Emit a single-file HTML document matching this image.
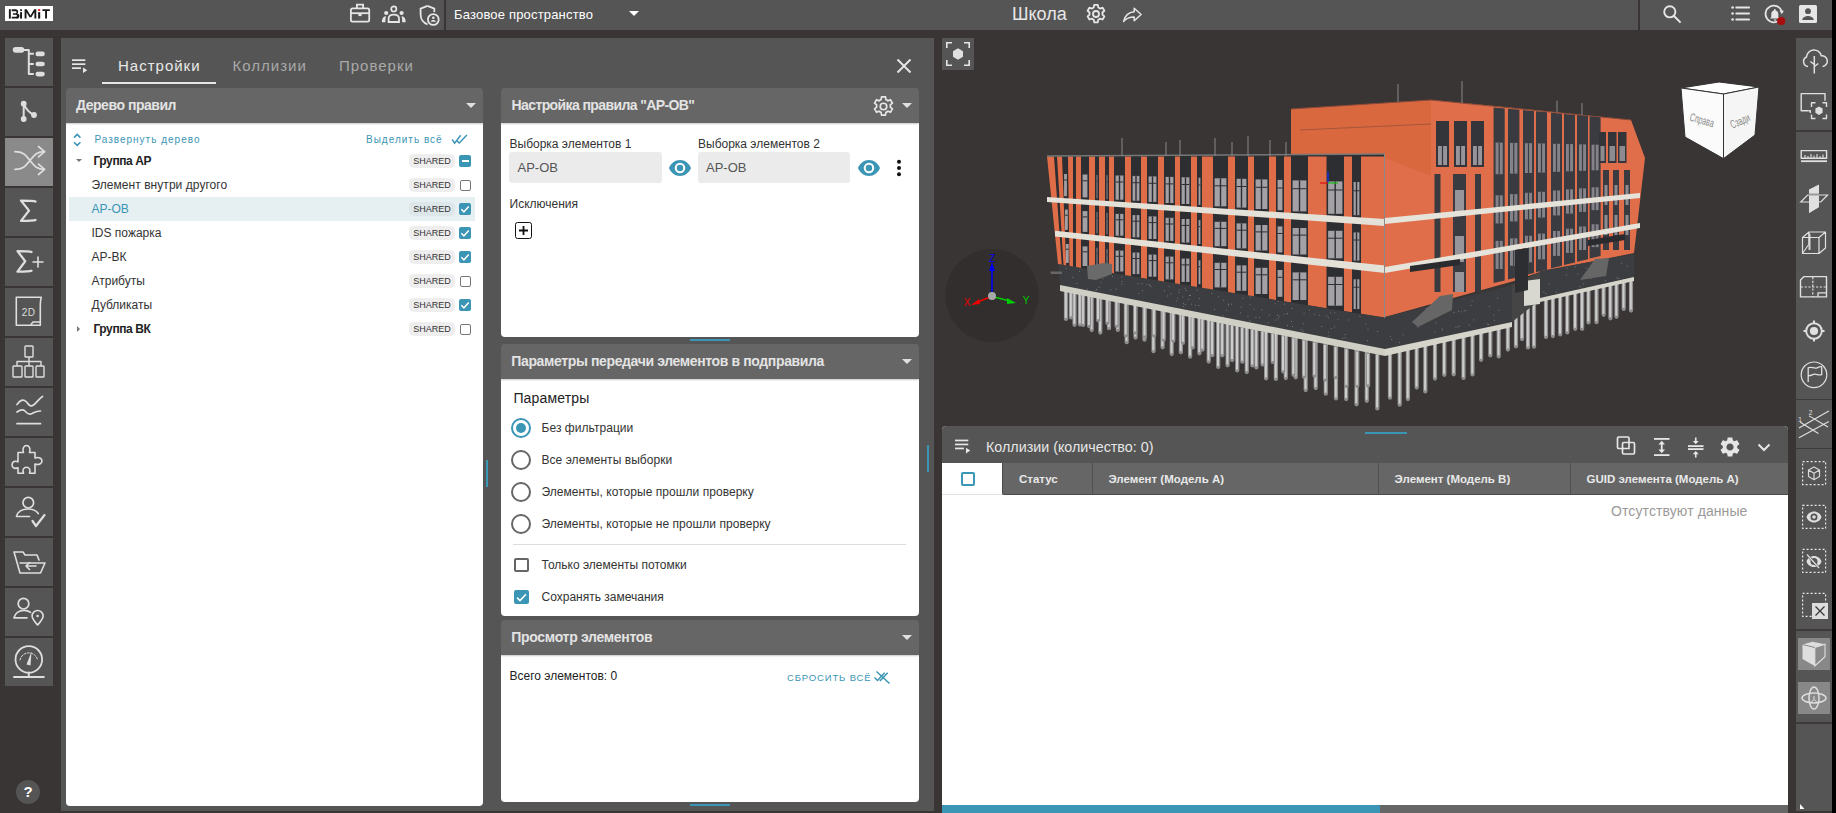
<!DOCTYPE html>
<html><head><meta charset="utf-8">
<style>
*{box-sizing:border-box;margin:0;padding:0}
html,body{width:1836px;height:813px;overflow:hidden;background:#393534;font-family:"Liberation Sans",sans-serif}
.a{position:absolute}
#top{left:0;top:0;width:1836px;height:30px;background:#555555}
.sb{position:absolute;left:5px;width:48px;height:48px;background:#555555}
.card{position:absolute;background:linear-gradient(#666666 0 30px,#fff 30px);border-radius:4px;overflow:hidden}
.ch{position:absolute;left:0;top:0;right:0;height:35px;background:#666666;box-shadow:0 1px 1.5px rgba(0,0,0,.22);color:#e3e3e3;font-weight:bold;font-size:13.5px}
.tri{position:absolute;width:0;height:0;border-left:5px solid transparent;border-right:5px solid transparent;border-top:5px solid #e0e0e0}
svg{position:absolute;overflow:visible}
.t{position:absolute;white-space:nowrap}
</style></head><body>
<!-- top bar -->
<div id="top" class="a">
  <div class="a" style="left:5px;top:6px;width:48px;height:15px;background:#fff"></div>
  <svg style="left:0;top:0" width="60" height="30">
    <g fill="#1a1a1a">
      <rect x="8.9" y="9.2" width="1.9" height="9.4"/>
      <path d="M11.7 9.2h4.1a2.4 2.4 0 0 1 1.6 4.2a2.6 2.6 0 0 1-1.3 5.2h-4.4v-1.8h4.2a1 1 0 0 0 0-2h-3v-1.6h2.7a.9.9 0 0 0 0-1.9h-3.9z"/>
      <rect x="20.1" y="12.1" width="1.9" height="6.5"/>
      <rect x="20.1" y="9.3" width="1.9" height="1.7"/>
      <path d="M24.6 18.6V9.2h2.1l3.75 6.3 3.75-6.3h2.1v9.4h-1.9v-6.3l-3 5h-1.9l-3-5v6.3z"/>
      <rect x="38.1" y="12.1" width="2.1" height="6.5"/>
      <path d="M42.4 9.3h7.4v1.8h-2.8v7.5h-1.9v-7.5h-2.7z"/>
    </g>
    <rect x="38.1" y="9.2" width="2.1" height="1.7" fill="#e00"/>
  </svg>
  <!-- briefcase -->
  <svg style="left:348px;top:1px" width="26" height="24" viewBox="0 0 26 24">
    <g fill="none" stroke="#e6e6e6" stroke-width="1.8">
      <rect x="2.9" y="7.3" width="18.3" height="13.3" rx="1.6"/>
      <path d="M8.9 7.3V3.7h6.2v3.6"/>
      <path d="M3 12.2h18.2"/>
    </g>
    <rect x="10.4" y="12.5" width="3.2" height="2.6" fill="#e6e6e6"/>
  </svg>
  <!-- people -->
  <svg style="left:380px;top:4px" width="28" height="20" viewBox="0 0 28 20">
    <g fill="#e6e6e6">
      <circle cx="13.8" cy="4.9" r="2.6" fill="none" stroke="#e6e6e6" stroke-width="1.7"/>
      <circle cx="6.2" cy="9" r="2.1"/>
      <circle cx="21.6" cy="9" r="2.1"/>
      <path d="M1.9 18.2c0-3 1-5.4 3.4-5.9h.7c-.5 1.8-.7 3.8-.6 5.9z"/>
      <path d="M25.7 18.2c0-3-1-5.4-3.4-5.9h-.7c.5 1.8.7 3.8.6 5.9z"/>
    </g>
    <path d="M8.6 18v-3.6c0-2.2 1.8-3.8 5.2-3.8s5.2 1.6 5.2 3.8V18z" fill="none" stroke="#e6e6e6" stroke-width="1.8"/>
  </svg>
  <!-- shield -->
  <svg style="left:417px;top:3px" width="26" height="24" viewBox="0 0 26 24">
    <path d="M10.5 2.8L3.6 5.7v5.8c0 4.6 3 8.5 6.9 9.8" fill="none" stroke="#e6e6e6" stroke-width="1.8"/>
    <path d="M10.5 2.8l6.8 2.9v3.4" fill="none" stroke="#e6e6e6" stroke-width="1.8"/>
    <circle cx="16.3" cy="16.5" r="5.4" fill="#555" stroke="#e6e6e6" stroke-width="1.8"/>
    <circle cx="16.3" cy="14.8" r="1.3" fill="#e6e6e6"/>
    <path d="M13.6 18.8c.5-1.3 1.4-1.8 2.7-1.8s2.2.5 2.7 1.8z" fill="#e6e6e6"/>
  </svg>
  <div class="a" style="left:444px;top:0;width:2px;height:30px;background:#393534"></div>
  <div class="t" style="left:454px;top:7px;font-size:13px;line-height:16px;color:#fff;letter-spacing:0.18px">Базовое пространство</div>
  <div class="tri" style="left:629px;top:11px;border-top-color:#fff;border-left-width:5px;border-right-width:5px;border-top-width:5.5px"></div>
  <div class="t" style="left:1012px;top:4px;font-size:18px;line-height:20px;color:#e8e8e8">Школа</div>
  <!-- gear -->
  <svg style="left:1084px;top:2px" width="24" height="24" viewBox="0 0 24 24">
    <path fill="none" stroke="#e6e6e6" stroke-width="1.8" stroke-linejoin="round" d="M10.2 2.9h3.6l.5 2.6c.7.25 1.3.6 1.8 1.05l2.5-.85 1.8 3.1-2 1.75c.15.7.15 1.4 0 2.1l2 1.75-1.8 3.1-2.5-.85c-.55.45-1.15.8-1.8 1.05l-.5 2.6h-3.6l-.5-2.6c-.7-.25-1.3-.6-1.8-1.05l-2.5.85-1.8-3.1 2-1.75c-.15-.7-.15-1.4 0-2.1l-2-1.75 1.8-3.1 2.5.85c.55-.45 1.15-.8 1.8-1.05z"/>
    <circle cx="12" cy="12" r="3" fill="none" stroke="#e6e6e6" stroke-width="1.8"/>
  </svg>
  <!-- share -->
  <svg style="left:1120px;top:2px" width="24" height="24" viewBox="0 0 24 24">
    <path fill="none" stroke="#e6e6e6" stroke-width="1.5" stroke-linejoin="round" d="M14.2 6.2v3.6c-6 .6-9.4 4.3-10.6 9.6 2.6-3 5.8-4.3 10.6-4.3v3.7l6.9-6.3z"/>
  </svg>
  <div class="a" style="left:1638px;top:0;width:2px;height:30px;background:#393534"></div>
  <!-- search -->
  <svg style="left:1660px;top:2px" width="24" height="24" viewBox="0 0 24 24">
    <circle cx="9.8" cy="9.8" r="5.6" fill="none" stroke="#e6e6e6" stroke-width="1.9"/>
    <path d="M14 14l6.6 6.6" stroke="#e6e6e6" stroke-width="2"/>
  </svg>
  <!-- list -->
  <svg style="left:1729px;top:2px" width="24" height="24" viewBox="0 0 24 24">
    <g fill="#e6e6e6"><circle cx="3.6" cy="5.5" r="1.3"/><circle cx="3.6" cy="11.5" r="1.3"/><circle cx="3.6" cy="17.5" r="1.3"/>
    <rect x="6.3" y="4.6" width="14.7" height="1.9" rx=".9"/><rect x="6.3" y="10.6" width="14.7" height="1.9" rx=".9"/><rect x="6.3" y="16.6" width="14.7" height="1.9" rx=".9"/></g>
  </svg>
  <!-- bell -->
  <svg style="left:1762px;top:2px" width="26" height="26" viewBox="0 0 26 26">
    <path d="M17.8 17.8A8.3 8.3 0 1 1 19.6 9" fill="none" stroke="#e6e6e6" stroke-width="1.8"/>
    <path d="M17.6 8.6l4.3.2-2.2 3.4z" fill="#e6e6e6"/>
    <path d="M8.4 16.6v-.7l.9-.9v-3c0-1.8 1-3.2 2.6-3.6v-.5a.9.9 0 0 1 1.8 0v.5c1.6.4 2.6 1.8 2.6 3.6v3l.9.9v.7z" fill="#e6e6e6"/>
    <path d="M11.8 17.4h2.6a1.3 1.3 0 0 1-2.6 0z" fill="#e6e6e6"/>
    <circle cx="19.2" cy="19" r="4.1" fill="#a80c0c"/>
  </svg>
  <!-- avatar -->
  <svg style="left:1799px;top:5px" width="18" height="18" viewBox="0 0 18 18">
    <rect x="0" y="0" width="18" height="18" rx="1.5" fill="#e6e6e6"/>
    <circle cx="9" cy="6.2" r="2.9" fill="#555"/>
    <path d="M3.3 14.6c0-2.6 3.8-3.7 5.7-3.7s5.7 1.1 5.7 3.7V15H3.3z" fill="#555"/>
  </svg>
</div>
<!-- left sidebar -->
<div class="sb" style="top:38px"></div>
<div class="sb" style="top:88px"></div>
<div class="sb" style="top:138px;background:#8a8a8a"></div>
<div class="sb" style="top:188px"></div>
<div class="sb" style="top:238px"></div>
<div class="sb" style="top:288px"></div>
<div class="sb" style="top:338px"></div>
<div class="sb" style="top:388px"></div>
<div class="sb" style="top:438px"></div>
<div class="sb" style="top:488px"></div>
<div class="sb" style="top:538px"></div>
<div class="sb" style="top:588px"></div>
<div class="sb" style="top:638px"></div>
<svg style="left:0;top:0" width="60" height="700">
 <g stroke="#dedede" fill="none" stroke-width="2" stroke-linecap="round" stroke-linejoin="round">
  <!-- 1 tree -->
  <path d="M24 50h4.8v24h5M28.8 53.8h5M28.8 64h5" stroke-linecap="butt"/>
  <!-- 2 branch -->
  <path d="M23.7 103.7V119M23.7 103.7c2 5 5 9 10.3 11.3"/>
  <!-- 3 shuffle -->
  <path d="M15 151.7c9 0 11 4 15 8.8s6 8.8 14.5 8.8M15 169.3c9 0 11-4 15-8.8s6-8.8 14.5-8.8" stroke-width="1.7"/>
  <path d="M38.5 146.5l6 5.2-6 5.2M38.5 164.1l6 5.2-6 5.2" stroke-width="1.7"/>
  <!-- 4 sigma -->
  <path d="M35.5 201.5c-2-.9-5-.9-14.5-.9l8 10-8 10.3c10 0 12.5 0 14.5-.9" stroke-width="2.3"/>
  <!-- 5 sigma+ -->
  <path d="M31.5 252c-2-.9-4.5-.9-14-.9l7.7 10.2-7.7 10.3c9.5 0 12 0 14-.9" stroke-width="2.3"/>
  <path d="M38 257v10M33 262h10" stroke-width="1.6"/>
  <!-- 6 2D -->
  <path d="M16.3 297.2h25c-1 3-1 6-1 9.5v18.5H16.3z" stroke-width="1.6"/>
  <path d="M31 324.5l2-2.5h7" stroke-width="1.6"/>
  <!-- 7 org -->
  <rect x="25" y="346" width="8" height="11" stroke-width="1.4" rx=".8"/>
  <path d="M29 357v9M17 366v-4.5h24v4.5M29 361.5v4.5" stroke-width="1.4" stroke-linecap="butt"/>
  <rect x="13" y="366" width="9" height="11" stroke-width="1.4" rx=".8"/>
  <rect x="25" y="366" width="8" height="11" stroke-width="1.4" rx=".8"/>
  <rect x="36" y="366" width="8" height="11" stroke-width="1.4" rx=".8"/>
  <!-- 8 chart -->
  <path d="M17 404.5c3-4 6-6 9-3s4 6 7.5 3.5 5-6 9-8.5" stroke-width="1.7"/>
  <path d="M17 412c4-3 6-3 8-1s3 4 6 3 4-3 9.5-3" stroke-width="1.7"/>
  <path d="M17 423.7h23.5" stroke-width="1.7"/>
  <!-- 9 puzzle -->
  <path d="M16 453.5h5.5c-1.5-4 .5-7 3-7s4.5 3 3 7h5.5v5.5c4-1.5 7 .5 7 3s-3 4.5-7 3v9.3h-5.5c1.5-4-.5-6-3-6s-4.5 2-3 6H16v-5.5c-4 1.5-6-.5-6-3s2-4.5 6-3z" stroke-width="1.6" transform="translate(2 -1)"/>
  <!-- 10 user check -->
  <circle cx="28.3" cy="502.7" r="5.3" stroke-width="1.7"/>
  <path d="M16.5 516.5c1-4.5 5.5-7.5 11.5-7.5 4.5 0 8.5 2 10.3 4.5M16.5 516.5h13" stroke-width="1.7"/>
  <path d="M32.5 521l3.5 5 8.5-11" stroke-width="2.2"/>
  <!-- 11 folder -->
  <path d="M14 552h9l2 3h12l2 5M14 552l6 21h20.5l4.5-10H20" stroke-width="1.6"/>
  <path d="M36 566h-10M29.5 562.5l-3.5 3.5 3.5 3.5" stroke-width="1.6"/>
  <!-- 12 user location -->
  <circle cx="23.5" cy="603.7" r="5.3" stroke-width="1.7"/>
  <path d="M14 617.8c1-4.5 5-7.5 10-7.5 3 0 5 .8 6.5 2M14 617.8h13" stroke-width="1.7"/>
  <path d="M37.6 625c-3-3.5-5.5-6-5.5-9a5.5 5.5 0 0 1 11 0c0 3-2.5 5.5-5.5 9z" stroke-width="1.6"/>
  <!-- 13 gauge -->
  <circle cx="28.8" cy="659.4" r="13.3" stroke-width="1.8"/>
  <path d="M14 677h29.8M28.8 672.7v4.3" stroke-width="2"/>
  <path d="M20 660a9 9 0 0 1 17.6 0" stroke-width="1" stroke-dasharray="2 1.5"/>
 </g>
 <g fill="#dedede">
  <rect x="12.8" y="47" width="11.5" height="5.7" rx="2.85"/>
  <rect x="35.5" y="51.6" width="9.3" height="4.6" rx="2.3"/>
  <rect x="35.5" y="61.7" width="9.3" height="4.6" rx="2.3"/>
  <rect x="35.5" y="71.8" width="9.3" height="4.6" rx="2.3"/>
  <circle cx="23.7" cy="103.7" r="2.9"/>
  <circle cx="34" cy="115" r="2.9"/>
  <circle cx="23.7" cy="119" r="2.9"/>
  <text x="28.6" y="316" font-size="10" font-family="Liberation Sans" text-anchor="middle" letter-spacing=".5">2D</text>
  <circle cx="37.6" cy="616" r="1.3"/>
  <path d="M26.5 664.5l5-13-1 14z"/>
 </g>
</svg>
<div class="a" style="left:16px;top:780px;width:24px;height:24px;border-radius:12px;background:#555"></div>
<div class="t" style="left:16px;top:783px;width:24px;text-align:center;font-size:15px;font-weight:bold;color:#fff;line-height:18px">?</div>
<!-- main panel -->
<div class="a" style="left:61px;top:38px;width:873px;height:773px;background:#555555"></div>
<svg style="left:70px;top:57px" width="20" height="20" viewBox="0 0 20 20">
  <g fill="#e6e6e6"><rect x="2" y="2.3" width="13.3" height="1.7"/><rect x="2" y="6.3" width="13.3" height="1.7"/><rect x="2" y="10.3" width="9" height="1.7"/>
  <path d="M13 10.5l4.3 2.8-4.3 2.8z"/></g>
</svg>
<div class="t" style="left:118px;top:57px;font-size:15px;line-height:18px;letter-spacing:1px;color:#e8e8e8">Настройки</div>
<div class="t" style="left:232.5px;top:57px;font-size:15px;line-height:18px;letter-spacing:1px;color:#a9a9a9">Коллизии</div>
<div class="t" style="left:339px;top:57px;font-size:15px;line-height:18px;letter-spacing:1px;color:#a9a9a9">Проверки</div>
<div class="a" style="left:102px;top:82px;width:114px;height:2px;background:#e6e6e6"></div>
<svg style="left:895px;top:57px" width="18" height="18" viewBox="0 0 18 18">
  <path d="M2.5 2.5l13 13M15.5 2.5l-13 13" stroke="#e6e6e6" stroke-width="1.9"/>
</svg>

<!-- card 1: rules tree -->
<div class="card" style="left:66px;top:88px;width:417px;height:718px">
  <div class="ch"><div class="t" style="left:10px;top:9px;line-height:17px;font-size:14px;letter-spacing:-0.46px">Дерево правил</div>
  <div class="tri" style="left:400px;top:15px"></div></div>
</div>
<svg style="left:72px;top:131.5px" width="12" height="16" viewBox="0 0 12 16">
  <path d="M2 5.6l3.2-3.2 3.2 3.2M2 10.2l3.2 3.2 3.2-3.2" fill="none" stroke="#3b95b5" stroke-width="1.6"/>
</svg>
<div class="t" style="left:94.4px;top:134px;font-size:10px;line-height:12px;letter-spacing:1px;color:#3b95b5">Развернуть дерево</div>
<div class="t" style="left:366px;top:134px;font-size:10px;line-height:12px;letter-spacing:1px;color:#3b95b5">Выделить всё</div>
<svg style="left:450px;top:131px" width="20" height="16" viewBox="0 0 20 16">
  <path d="M2.2 8.3L4.6 12.2L10.7 4.3M6.2 9L9.2 12L16.9 3.9" fill="none" stroke="#3b95b5" stroke-width="1.5"/>
</svg>
<!-- highlight row -->
<div class="a" style="left:69px;top:197px;width:406px;height:24px;background:#e6f0f3"></div>
<div class="tri" style="left:75.6px;top:159.3px;border-top-color:#777;border-left-width:3.3px;border-right-width:3.3px;border-top-width:3.6px"></div>
<div class="tri" style="left:77px;top:325.5px;border-top:3.3px solid transparent;border-bottom:3.3px solid transparent;border-left:3.6px solid #777;border-right:0"></div>
<div class="t" style="left:93.4px;top:154px;font-size:12px;line-height:14px;font-weight:bold;color:#222;letter-spacing:-0.4px">Группа АР</div>
<div class="t" style="left:91.5px;top:178px;font-size:12px;line-height:14px;color:#333;letter-spacing:0.05px">Элемент внутри другого</div>
<div class="t" style="left:91.5px;top:202px;font-size:12px;line-height:14px;color:#3b95b5">АР-ОВ</div>
<div class="t" style="left:91.5px;top:226px;font-size:12px;line-height:14px;color:#333">IDS пожарка</div>
<div class="t" style="left:91.5px;top:250px;font-size:12px;line-height:14px;color:#333">АР-ВК</div>
<div class="t" style="left:91.5px;top:274px;font-size:12px;line-height:14px;color:#333">Атрибуты</div>
<div class="t" style="left:91.5px;top:298px;font-size:12px;line-height:14px;color:#333">Дубликаты</div>
<div class="t" style="left:93.4px;top:322px;font-size:12px;line-height:14px;font-weight:bold;color:#222;letter-spacing:-0.4px">Группа ВК</div>
<div class="a" style="left:409px;top:154px;width:46px;height:14px;border-radius:5px;background:#eeeeee"></div>
<div class="t" style="left:409px;top:155px;width:46px;text-align:center;font-size:9px;line-height:12px;color:#333">SHARED</div>
<div class="a" style="left:459px;top:155px;width:12px;height:12px;background:#3b95b5;border-radius:2px"></div>
<div class="a" style="left:461.5px;top:160.2px;width:7px;height:1.6px;background:#fff"></div>
<div class="a" style="left:409px;top:178px;width:46px;height:14px;border-radius:5px;background:#eeeeee"></div>
<div class="t" style="left:409px;top:179px;width:46px;text-align:center;font-size:9px;line-height:12px;color:#333">SHARED</div>
<div class="a" style="left:459.5px;top:179.5px;width:11.5px;height:11.5px;border:1.6px solid #777;border-radius:2px"></div>
<div class="a" style="left:409px;top:202px;width:46px;height:14px;border-radius:5px;background:#dde7ea"></div>
<div class="t" style="left:409px;top:203px;width:46px;text-align:center;font-size:9px;line-height:12px;color:#333">SHARED</div>
<div class="a" style="left:459px;top:203px;width:12px;height:12px;background:#3b95b5;border-radius:2px"></div>
<svg style="left:459px;top:203px" width="12" height="12" viewBox="0 0 12 12"><path d="M2.3 6.2l2.6 2.6 4.9-5.3" fill="none" stroke="#fff" stroke-width="1.5"/></svg>
<div class="a" style="left:409px;top:226px;width:46px;height:14px;border-radius:5px;background:#eeeeee"></div>
<div class="t" style="left:409px;top:227px;width:46px;text-align:center;font-size:9px;line-height:12px;color:#333">SHARED</div>
<div class="a" style="left:459px;top:227px;width:12px;height:12px;background:#3b95b5;border-radius:2px"></div>
<svg style="left:459px;top:227px" width="12" height="12" viewBox="0 0 12 12"><path d="M2.3 6.2l2.6 2.6 4.9-5.3" fill="none" stroke="#fff" stroke-width="1.5"/></svg>
<div class="a" style="left:409px;top:250px;width:46px;height:14px;border-radius:5px;background:#eeeeee"></div>
<div class="t" style="left:409px;top:251px;width:46px;text-align:center;font-size:9px;line-height:12px;color:#333">SHARED</div>
<div class="a" style="left:459px;top:251px;width:12px;height:12px;background:#3b95b5;border-radius:2px"></div>
<svg style="left:459px;top:251px" width="12" height="12" viewBox="0 0 12 12"><path d="M2.3 6.2l2.6 2.6 4.9-5.3" fill="none" stroke="#fff" stroke-width="1.5"/></svg>
<div class="a" style="left:409px;top:274px;width:46px;height:14px;border-radius:5px;background:#eeeeee"></div>
<div class="t" style="left:409px;top:275px;width:46px;text-align:center;font-size:9px;line-height:12px;color:#333">SHARED</div>
<div class="a" style="left:459.5px;top:275.5px;width:11.5px;height:11.5px;border:1.6px solid #777;border-radius:2px"></div>
<div class="a" style="left:409px;top:298px;width:46px;height:14px;border-radius:5px;background:#eeeeee"></div>
<div class="t" style="left:409px;top:299px;width:46px;text-align:center;font-size:9px;line-height:12px;color:#333">SHARED</div>
<div class="a" style="left:459px;top:299px;width:12px;height:12px;background:#3b95b5;border-radius:2px"></div>
<svg style="left:459px;top:299px" width="12" height="12" viewBox="0 0 12 12"><path d="M2.3 6.2l2.6 2.6 4.9-5.3" fill="none" stroke="#fff" stroke-width="1.5"/></svg>
<div class="a" style="left:409px;top:322px;width:46px;height:14px;border-radius:5px;background:#eeeeee"></div>
<div class="t" style="left:409px;top:323px;width:46px;text-align:center;font-size:9px;line-height:12px;color:#333">SHARED</div>
<div class="a" style="left:459.5px;top:323.5px;width:11.5px;height:11.5px;border:1.6px solid #777;border-radius:2px"></div>
<!-- card A -->
<div class="card" style="left:501px;top:88px;width:418px;height:249px">
  <div class="ch"><div class="t" style="left:10.5px;top:9px;line-height:17px;font-size:14px;letter-spacing:-0.6px">Настройка правила "АР-ОВ"</div>
  <div class="tri" style="left:401px;top:15px"></div></div>
</div>
<svg style="left:869.5px;top:92.5px" width="27" height="27" viewBox="0 0 24 24">
  <path fill="none" stroke="#e6e6e6" stroke-width="1.5" d="M10.3 3.5h3.4l.5 2.4c.6.2 1.2.6 1.7 1l2.3-.8 1.7 2.9-1.8 1.6c.1.6.1 1.3 0 1.9l1.8 1.6-1.7 2.9-2.3-.8c-.5.4-1.1.8-1.7 1l-.5 2.4h-3.4l-.5-2.4c-.6-.2-1.2-.6-1.7-1l-2.3.8-1.7-2.9 1.8-1.6c-.1-.6-.1-1.3 0-1.9L4.1 9l1.7-2.9 2.3.8c.5-.4 1.1-.8 1.7-1z"/>
  <circle cx="12" cy="12" r="2.9" fill="none" stroke="#e6e6e6" stroke-width="1.5"/>
</svg>
<div class="t" style="left:509.5px;top:137px;font-size:12px;line-height:14px;color:#333">Выборка элементов 1</div>
<div class="t" style="left:698px;top:137px;font-size:12px;line-height:14px;color:#333">Выборка элементов 2</div>
<div class="a" style="left:509px;top:152px;width:153px;height:31px;background:#ebebeb;border-radius:3px"></div>
<div class="a" style="left:698px;top:152px;width:152px;height:31px;background:#ebebeb;border-radius:3px"></div>
<div class="t" style="left:517.5px;top:160px;font-size:13px;line-height:16px;color:#555">АР-ОВ</div>
<div class="t" style="left:706px;top:160px;font-size:13px;line-height:16px;color:#555">АР-ОВ</div>
<svg style="left:668px;top:157px" width="24" height="22" viewBox="0 0 24 22">
  <path fill="#3b95b5" d="M12 3C7 3 2.9 6.3 1 11c1.9 4.7 6 8 11 8s9.1-3.3 11-8c-1.9-4.7-6-8-11-8zm0 13.3a5.3 5.3 0 1 1 0-10.6 5.3 5.3 0 0 1 0 10.6zm0-8.5a3.2 3.2 0 1 0 0 6.4 3.2 3.2 0 0 0 0-6.4z"/>
</svg>
<svg style="left:857px;top:157px" width="24" height="22" viewBox="0 0 24 22">
  <path fill="#3b95b5" d="M12 3C7 3 2.9 6.3 1 11c1.9 4.7 6 8 11 8s9.1-3.3 11-8c-1.9-4.7-6-8-11-8zm0 13.3a5.3 5.3 0 1 1 0-10.6 5.3 5.3 0 0 1 0 10.6zm0-8.5a3.2 3.2 0 1 0 0 6.4 3.2 3.2 0 0 0 0-6.4z"/>
</svg>
<svg style="left:890.5px;top:158px" width="16" height="20" viewBox="0 0 16 20">
  <g fill="#111"><circle cx="8" cy="3.7" r="2"/><circle cx="8" cy="10" r="2"/><circle cx="8" cy="16.3" r="2"/></g>
</svg>
<div class="t" style="left:509.5px;top:197px;font-size:12px;line-height:14px;color:#333">Исключения</div>
<div class="a" style="left:514.5px;top:222px;width:17px;height:16.5px;border:1.8px solid #111;border-radius:2.5px"></div>
<svg style="left:514.5px;top:222px" width="17" height="17" viewBox="0 0 17 17"><path d="M8.5 4v9M4 8.5h9" stroke="#111" stroke-width="1.8"/></svg>
<div class="a" style="left:690px;top:339px;width:40px;height:2px;background:#3b95b5"></div>

<!-- card B -->
<div class="card" style="left:501px;top:344px;width:418px;height:272px">
  <div class="ch"><div class="t" style="left:10.3px;top:9px;line-height:17px;font-size:14px;letter-spacing:-0.37px">Параметры передачи элементов в подправила</div>
  <div class="tri" style="left:401px;top:15px"></div></div>
</div>
<div class="t" style="left:513.4px;top:389.5px;font-size:14px;line-height:17px;color:#222;letter-spacing:0.15px">Параметры</div>
<div class="a" style="left:511px;top:418px;width:20px;height:20px;border:2px solid #3b95b5;border-radius:50%"></div>
<div class="a" style="left:516px;top:423px;width:10px;height:10px;background:#3b95b5;border-radius:50%"></div>
<div class="t" style="left:541.5px;top:421px;font-size:12px;line-height:14px;color:#333;letter-spacing:0.05px">Без фильтрации</div>
<div class="a" style="left:511px;top:450px;width:20px;height:20px;border:2px solid #666;border-radius:50%"></div>
<div class="t" style="left:541.5px;top:453px;font-size:12px;line-height:14px;color:#333;letter-spacing:0.05px">Все элементы выборки</div>
<div class="a" style="left:511px;top:482px;width:20px;height:20px;border:2px solid #666;border-radius:50%"></div>
<div class="t" style="left:541.5px;top:485px;font-size:12px;line-height:14px;color:#333;letter-spacing:0.05px">Элементы, которые прошли проверку</div>
<div class="a" style="left:511px;top:514px;width:20px;height:20px;border:2px solid #666;border-radius:50%"></div>
<div class="t" style="left:541.5px;top:517px;font-size:12px;line-height:14px;color:#333;letter-spacing:0.05px">Элементы, которые не прошли проверку</div>
<div class="a" style="left:513px;top:544px;width:393px;height:1px;background:#ddd"></div>
<div class="a" style="left:514px;top:557.5px;width:14.5px;height:14.5px;border:2px solid #666;border-radius:2px"></div>
<div class="t" style="left:541.5px;top:558px;font-size:12px;line-height:14px;color:#333">Только элементы потомки</div>
<div class="a" style="left:514px;top:589.5px;width:14.5px;height:14.5px;background:#3b95b5;border-radius:2px"></div>
<svg style="left:514px;top:589.5px" width="15" height="15" viewBox="0 0 15 15"><path d="M3 7.6l3 3 6-6.3" fill="none" stroke="#fff" stroke-width="1.6"/></svg>
<div class="t" style="left:541.5px;top:590px;font-size:12px;line-height:14px;color:#333">Сохранять замечания</div>
<!-- card C -->
<div class="card" style="left:501px;top:620px;width:418px;height:182px">
  <div class="ch"><div class="t" style="left:10.3px;top:9px;line-height:17px;font-size:14px;letter-spacing:-0.31px">Просмотр элементов</div>
  <div class="tri" style="left:401px;top:15px"></div></div>
</div>
<div class="t" style="left:509.5px;top:669px;font-size:12px;line-height:14px;color:#222">Всего элементов: 0</div>
<div class="t" style="left:787px;top:671.5px;font-size:9.5px;line-height:11px;color:#3b95b5;letter-spacing:0.85px">СБРОСИТЬ ВСЁ</div>
<svg style="left:873px;top:669px" width="20" height="16" viewBox="0 0 20 16">
  <path d="M1.5 8.5l3 3 7.2-7.8M6.8 10.8l.7.7 7.2-7.8M3.5 2.5l13 12" fill="none" stroke="#3b95b5" stroke-width="1.5"/>
</svg>
<div class="a" style="left:690px;top:804px;width:40px;height:2px;background:#3b95b5"></div>
<div class="a" style="left:486px;top:460px;width:2px;height:27px;background:#3b95b5"></div>
<div class="a" style="left:927px;top:445px;width:2px;height:27px;background:#3b95b5"></div>
<svg style="left:934px;top:30px" width="862" height="396" viewBox="934 30 862 396">
<circle cx="992" cy="295.5" r="46.5" fill="#312e2d"/>
<path d="M1066.0 290.0V318.9" stroke="#8e8e8e" stroke-width="4.2" stroke-linecap="round"/>
<path d="M1065.8 290.0V317.9" stroke="#cdcdcd" stroke-width="2"/>
<path d="M1074.5 291.8V324.8" stroke="#8e8e8e" stroke-width="4.2" stroke-linecap="round"/>
<path d="M1074.3 291.8V323.8" stroke="#cdcdcd" stroke-width="2"/>
<path d="M1083.1 293.6V325.0" stroke="#8e8e8e" stroke-width="4.2" stroke-linecap="round"/>
<path d="M1082.9 293.6V324.0" stroke="#cdcdcd" stroke-width="2"/>
<path d="M1091.7 295.3V330.1" stroke="#8e8e8e" stroke-width="4.2" stroke-linecap="round"/>
<path d="M1091.5 295.3V329.1" stroke="#cdcdcd" stroke-width="2"/>
<path d="M1100.3 297.2V332.6" stroke="#8e8e8e" stroke-width="4.2" stroke-linecap="round"/>
<path d="M1100.1 297.2V331.6" stroke="#cdcdcd" stroke-width="2"/>
<path d="M1109.0 299.0V328.2" stroke="#8e8e8e" stroke-width="4.2" stroke-linecap="round"/>
<path d="M1108.8 299.0V327.2" stroke="#cdcdcd" stroke-width="2"/>
<path d="M1117.8 300.8V329.9" stroke="#8e8e8e" stroke-width="4.2" stroke-linecap="round"/>
<path d="M1117.6 300.8V328.9" stroke="#cdcdcd" stroke-width="2"/>
<path d="M1126.7 302.6V342.2" stroke="#8e8e8e" stroke-width="4.2" stroke-linecap="round"/>
<path d="M1126.5 302.6V341.2" stroke="#cdcdcd" stroke-width="2"/>
<path d="M1135.5 304.5V337.6" stroke="#8e8e8e" stroke-width="4.2" stroke-linecap="round"/>
<path d="M1135.3 304.5V336.6" stroke="#cdcdcd" stroke-width="2"/>
<path d="M1144.5 306.4V339.7" stroke="#8e8e8e" stroke-width="4.2" stroke-linecap="round"/>
<path d="M1144.3 306.4V338.7" stroke="#cdcdcd" stroke-width="2"/>
<path d="M1153.5 308.2V351.2" stroke="#8e8e8e" stroke-width="4.2" stroke-linecap="round"/>
<path d="M1153.3 308.2V350.2" stroke="#cdcdcd" stroke-width="2"/>
<path d="M1162.6 310.1V347.3" stroke="#8e8e8e" stroke-width="4.2" stroke-linecap="round"/>
<path d="M1162.4 310.1V346.3" stroke="#cdcdcd" stroke-width="2"/>
<path d="M1171.7 312.0V354.1" stroke="#8e8e8e" stroke-width="4.2" stroke-linecap="round"/>
<path d="M1171.5 312.0V353.1" stroke="#cdcdcd" stroke-width="2"/>
<path d="M1180.9 313.9V352.3" stroke="#8e8e8e" stroke-width="4.2" stroke-linecap="round"/>
<path d="M1180.7 313.9V351.3" stroke="#cdcdcd" stroke-width="2"/>
<path d="M1190.1 315.9V356.7" stroke="#8e8e8e" stroke-width="4.2" stroke-linecap="round"/>
<path d="M1189.9 315.9V355.7" stroke="#cdcdcd" stroke-width="2"/>
<path d="M1199.4 317.8V353.3" stroke="#8e8e8e" stroke-width="4.2" stroke-linecap="round"/>
<path d="M1199.2 317.8V352.3" stroke="#cdcdcd" stroke-width="2"/>
<path d="M1208.7 319.7V361.6" stroke="#8e8e8e" stroke-width="4.2" stroke-linecap="round"/>
<path d="M1208.5 319.7V360.6" stroke="#cdcdcd" stroke-width="2"/>
<path d="M1218.2 321.7V366.9" stroke="#8e8e8e" stroke-width="4.2" stroke-linecap="round"/>
<path d="M1218.0 321.7V365.9" stroke="#cdcdcd" stroke-width="2"/>
<path d="M1227.6 323.7V365.3" stroke="#8e8e8e" stroke-width="4.2" stroke-linecap="round"/>
<path d="M1227.4 323.7V364.3" stroke="#cdcdcd" stroke-width="2"/>
<path d="M1237.2 325.7V370.4" stroke="#8e8e8e" stroke-width="4.2" stroke-linecap="round"/>
<path d="M1237.0 325.7V369.4" stroke="#cdcdcd" stroke-width="2"/>
<path d="M1246.8 327.7V372.1" stroke="#8e8e8e" stroke-width="4.2" stroke-linecap="round"/>
<path d="M1246.6 327.7V371.1" stroke="#cdcdcd" stroke-width="2"/>
<path d="M1256.4 329.7V367.4" stroke="#8e8e8e" stroke-width="4.2" stroke-linecap="round"/>
<path d="M1256.2 329.7V366.4" stroke="#cdcdcd" stroke-width="2"/>
<path d="M1266.1 331.7V378.3" stroke="#8e8e8e" stroke-width="4.2" stroke-linecap="round"/>
<path d="M1265.9 331.7V377.3" stroke="#cdcdcd" stroke-width="2"/>
<path d="M1275.9 333.7V378.9" stroke="#8e8e8e" stroke-width="4.2" stroke-linecap="round"/>
<path d="M1275.7 333.7V377.9" stroke="#cdcdcd" stroke-width="2"/>
<path d="M1285.8 335.8V378.1" stroke="#8e8e8e" stroke-width="4.2" stroke-linecap="round"/>
<path d="M1285.6 335.8V377.1" stroke="#cdcdcd" stroke-width="2"/>
<path d="M1295.7 337.8V377.5" stroke="#8e8e8e" stroke-width="4.2" stroke-linecap="round"/>
<path d="M1295.5 337.8V376.5" stroke="#cdcdcd" stroke-width="2"/>
<path d="M1305.7 339.9V390.1" stroke="#8e8e8e" stroke-width="4.2" stroke-linecap="round"/>
<path d="M1305.5 339.9V389.1" stroke="#cdcdcd" stroke-width="2"/>
<path d="M1315.7 342.0V388.1" stroke="#8e8e8e" stroke-width="4.2" stroke-linecap="round"/>
<path d="M1315.5 342.0V387.1" stroke="#cdcdcd" stroke-width="2"/>
<path d="M1325.8 344.1V393.7" stroke="#8e8e8e" stroke-width="4.2" stroke-linecap="round"/>
<path d="M1325.6 344.1V392.7" stroke="#cdcdcd" stroke-width="2"/>
<path d="M1336.0 346.2V398.4" stroke="#8e8e8e" stroke-width="4.2" stroke-linecap="round"/>
<path d="M1335.8 346.2V397.4" stroke="#cdcdcd" stroke-width="2"/>
<path d="M1346.2 348.4V399.1" stroke="#8e8e8e" stroke-width="4.2" stroke-linecap="round"/>
<path d="M1346.0 348.4V398.1" stroke="#cdcdcd" stroke-width="2"/>
<path d="M1356.5 350.5V404.3" stroke="#8e8e8e" stroke-width="4.2" stroke-linecap="round"/>
<path d="M1356.3 350.5V403.3" stroke="#cdcdcd" stroke-width="2"/>
<path d="M1366.8 352.7V400.8" stroke="#8e8e8e" stroke-width="4.2" stroke-linecap="round"/>
<path d="M1366.6 352.7V399.8" stroke="#cdcdcd" stroke-width="2"/>
<path d="M1377.3 354.8V408.4" stroke="#8e8e8e" stroke-width="4.2" stroke-linecap="round"/>
<path d="M1377.1 354.8V407.4" stroke="#cdcdcd" stroke-width="2"/>
<path d="M1071.0 292.0V317.4" stroke="#8e8e8e" stroke-width="4.2" stroke-linecap="round"/>
<path d="M1070.8 292.0V316.4" stroke="#cdcdcd" stroke-width="2"/>
<path d="M1080.0 293.9V324.5" stroke="#8e8e8e" stroke-width="4.2" stroke-linecap="round"/>
<path d="M1079.8 293.9V323.5" stroke="#cdcdcd" stroke-width="2"/>
<path d="M1089.1 295.8V326.0" stroke="#8e8e8e" stroke-width="4.2" stroke-linecap="round"/>
<path d="M1088.9 295.8V325.0" stroke="#cdcdcd" stroke-width="2"/>
<path d="M1098.2 297.7V320.3" stroke="#8e8e8e" stroke-width="4.2" stroke-linecap="round"/>
<path d="M1098.0 297.7V319.3" stroke="#cdcdcd" stroke-width="2"/>
<path d="M1107.4 299.6V322.9" stroke="#8e8e8e" stroke-width="4.2" stroke-linecap="round"/>
<path d="M1107.2 299.6V321.9" stroke="#cdcdcd" stroke-width="2"/>
<path d="M1116.6 301.5V325.9" stroke="#8e8e8e" stroke-width="4.2" stroke-linecap="round"/>
<path d="M1116.4 301.5V324.9" stroke="#cdcdcd" stroke-width="2"/>
<path d="M1125.9 303.4V335.5" stroke="#8e8e8e" stroke-width="4.2" stroke-linecap="round"/>
<path d="M1125.7 303.4V334.5" stroke="#cdcdcd" stroke-width="2"/>
<path d="M1135.2 305.4V332.4" stroke="#8e8e8e" stroke-width="4.2" stroke-linecap="round"/>
<path d="M1135.0 305.4V331.4" stroke="#cdcdcd" stroke-width="2"/>
<path d="M1144.7 307.4V336.5" stroke="#8e8e8e" stroke-width="4.2" stroke-linecap="round"/>
<path d="M1144.5 307.4V335.5" stroke="#cdcdcd" stroke-width="2"/>
<path d="M1154.1 309.3V335.5" stroke="#8e8e8e" stroke-width="4.2" stroke-linecap="round"/>
<path d="M1153.9 309.3V334.5" stroke="#cdcdcd" stroke-width="2"/>
<path d="M1163.7 311.3V339.8" stroke="#8e8e8e" stroke-width="4.2" stroke-linecap="round"/>
<path d="M1163.5 311.3V338.8" stroke="#cdcdcd" stroke-width="2"/>
<path d="M1173.3 313.3V340.8" stroke="#8e8e8e" stroke-width="4.2" stroke-linecap="round"/>
<path d="M1173.1 313.3V339.8" stroke="#cdcdcd" stroke-width="2"/>
<path d="M1183.0 315.3V342.8" stroke="#8e8e8e" stroke-width="4.2" stroke-linecap="round"/>
<path d="M1182.8 315.3V341.8" stroke="#cdcdcd" stroke-width="2"/>
<path d="M1192.7 317.4V347.4" stroke="#8e8e8e" stroke-width="4.2" stroke-linecap="round"/>
<path d="M1192.5 317.4V346.4" stroke="#cdcdcd" stroke-width="2"/>
<path d="M1202.5 319.4V349.7" stroke="#8e8e8e" stroke-width="4.2" stroke-linecap="round"/>
<path d="M1202.3 319.4V348.7" stroke="#cdcdcd" stroke-width="2"/>
<path d="M1212.3 321.5V355.2" stroke="#8e8e8e" stroke-width="4.2" stroke-linecap="round"/>
<path d="M1212.1 321.5V354.2" stroke="#cdcdcd" stroke-width="2"/>
<path d="M1222.3 323.5V355.3" stroke="#8e8e8e" stroke-width="4.2" stroke-linecap="round"/>
<path d="M1222.1 323.5V354.3" stroke="#cdcdcd" stroke-width="2"/>
<path d="M1232.2 325.6V360.1" stroke="#8e8e8e" stroke-width="4.2" stroke-linecap="round"/>
<path d="M1232.0 325.6V359.1" stroke="#cdcdcd" stroke-width="2"/>
<path d="M1242.3 327.7V361.7" stroke="#8e8e8e" stroke-width="4.2" stroke-linecap="round"/>
<path d="M1242.1 327.7V360.7" stroke="#cdcdcd" stroke-width="2"/>
<path d="M1252.4 329.8V365.5" stroke="#8e8e8e" stroke-width="4.2" stroke-linecap="round"/>
<path d="M1252.2 329.8V364.5" stroke="#cdcdcd" stroke-width="2"/>
<path d="M1262.6 331.9V364.6" stroke="#8e8e8e" stroke-width="4.2" stroke-linecap="round"/>
<path d="M1262.4 331.9V363.6" stroke="#cdcdcd" stroke-width="2"/>
<path d="M1272.8 334.1V362.0" stroke="#8e8e8e" stroke-width="4.2" stroke-linecap="round"/>
<path d="M1272.6 334.1V361.0" stroke="#cdcdcd" stroke-width="2"/>
<path d="M1283.2 336.2V371.4" stroke="#8e8e8e" stroke-width="4.2" stroke-linecap="round"/>
<path d="M1283.0 336.2V370.4" stroke="#cdcdcd" stroke-width="2"/>
<path d="M1293.5 338.4V374.8" stroke="#8e8e8e" stroke-width="4.2" stroke-linecap="round"/>
<path d="M1293.3 338.4V373.8" stroke="#cdcdcd" stroke-width="2"/>
<path d="M1304.0 340.6V376.7" stroke="#8e8e8e" stroke-width="4.2" stroke-linecap="round"/>
<path d="M1303.8 340.6V375.7" stroke="#cdcdcd" stroke-width="2"/>
<path d="M1314.5 342.8V375.8" stroke="#8e8e8e" stroke-width="4.2" stroke-linecap="round"/>
<path d="M1314.3 342.8V374.8" stroke="#cdcdcd" stroke-width="2"/>
<path d="M1325.1 345.0V379.7" stroke="#8e8e8e" stroke-width="4.2" stroke-linecap="round"/>
<path d="M1324.9 345.0V378.7" stroke="#cdcdcd" stroke-width="2"/>
<path d="M1335.7 347.2V377.2" stroke="#8e8e8e" stroke-width="4.2" stroke-linecap="round"/>
<path d="M1335.5 347.2V376.2" stroke="#cdcdcd" stroke-width="2"/>
<path d="M1346.5 349.4V385.9" stroke="#8e8e8e" stroke-width="4.2" stroke-linecap="round"/>
<path d="M1346.3 349.4V384.9" stroke="#cdcdcd" stroke-width="2"/>
<path d="M1357.3 351.7V385.9" stroke="#8e8e8e" stroke-width="4.2" stroke-linecap="round"/>
<path d="M1357.1 351.7V384.9" stroke="#cdcdcd" stroke-width="2"/>
<path d="M1368.1 353.9V385.5" stroke="#8e8e8e" stroke-width="4.2" stroke-linecap="round"/>
<path d="M1367.9 353.9V384.5" stroke="#cdcdcd" stroke-width="2"/>
<path d="M1390.0 350.9V397.7" stroke="#8e8e8e" stroke-width="4.2" stroke-linecap="round"/>
<path d="M1389.8 350.9V396.7" stroke="#cdcdcd" stroke-width="2"/>
<path d="M1399.7 348.9V404.7" stroke="#8e8e8e" stroke-width="4.2" stroke-linecap="round"/>
<path d="M1399.5 348.9V403.7" stroke="#cdcdcd" stroke-width="2"/>
<path d="M1407.9 347.1V399.1" stroke="#8e8e8e" stroke-width="4.2" stroke-linecap="round"/>
<path d="M1407.7 347.1V398.1" stroke="#cdcdcd" stroke-width="2"/>
<path d="M1416.7 345.3V387.6" stroke="#8e8e8e" stroke-width="4.2" stroke-linecap="round"/>
<path d="M1416.5 345.3V386.6" stroke="#cdcdcd" stroke-width="2"/>
<path d="M1425.3 343.4V391.4" stroke="#8e8e8e" stroke-width="4.2" stroke-linecap="round"/>
<path d="M1425.1 343.4V390.4" stroke="#cdcdcd" stroke-width="2"/>
<path d="M1435.0 341.4V378.6" stroke="#8e8e8e" stroke-width="4.2" stroke-linecap="round"/>
<path d="M1434.8 341.4V377.6" stroke="#cdcdcd" stroke-width="2"/>
<path d="M1444.3 339.4V374.8" stroke="#8e8e8e" stroke-width="4.2" stroke-linecap="round"/>
<path d="M1444.1 339.4V373.8" stroke="#cdcdcd" stroke-width="2"/>
<path d="M1453.7 337.4V374.3" stroke="#8e8e8e" stroke-width="4.2" stroke-linecap="round"/>
<path d="M1453.5 337.4V373.3" stroke="#cdcdcd" stroke-width="2"/>
<path d="M1463.5 335.3V378.0" stroke="#8e8e8e" stroke-width="4.2" stroke-linecap="round"/>
<path d="M1463.3 335.3V377.0" stroke="#cdcdcd" stroke-width="2"/>
<path d="M1472.5 333.4V374.5" stroke="#8e8e8e" stroke-width="4.2" stroke-linecap="round"/>
<path d="M1472.3 333.4V373.5" stroke="#cdcdcd" stroke-width="2"/>
<path d="M1481.1 331.6V359.8" stroke="#8e8e8e" stroke-width="4.2" stroke-linecap="round"/>
<path d="M1480.9 331.6V358.8" stroke="#cdcdcd" stroke-width="2"/>
<path d="M1490.3 329.6V355.4" stroke="#8e8e8e" stroke-width="4.2" stroke-linecap="round"/>
<path d="M1490.1 329.6V354.4" stroke="#cdcdcd" stroke-width="2"/>
<path d="M1498.7 327.8V356.4" stroke="#8e8e8e" stroke-width="4.2" stroke-linecap="round"/>
<path d="M1498.5 327.8V355.4" stroke="#cdcdcd" stroke-width="2"/>
<path d="M1507.9 325.9V349.6" stroke="#8e8e8e" stroke-width="4.2" stroke-linecap="round"/>
<path d="M1507.7 325.9V348.6" stroke="#cdcdcd" stroke-width="2"/>
<path d="M1516.0 305.0V346.3" stroke="#8e8e8e" stroke-width="4.2" stroke-linecap="round"/>
<path d="M1515.8 305.0V345.3" stroke="#cdcdcd" stroke-width="2"/>
<path d="M1522.0 305.0V339.1" stroke="#8e8e8e" stroke-width="4.2" stroke-linecap="round"/>
<path d="M1521.8 305.0V338.1" stroke="#cdcdcd" stroke-width="2"/>
<path d="M1528.0 305.0V347.5" stroke="#8e8e8e" stroke-width="4.2" stroke-linecap="round"/>
<path d="M1527.8 305.0V346.5" stroke="#cdcdcd" stroke-width="2"/>
<path d="M1534.0 305.0V346.7" stroke="#8e8e8e" stroke-width="4.2" stroke-linecap="round"/>
<path d="M1533.8 305.0V345.7" stroke="#cdcdcd" stroke-width="2"/>
<path d="M1546.0 298.7V336.9" stroke="#8e8e8e" stroke-width="4.2" stroke-linecap="round"/>
<path d="M1545.8 298.7V335.9" stroke="#cdcdcd" stroke-width="2"/>
<path d="M1552.9 297.1V336.1" stroke="#8e8e8e" stroke-width="4.2" stroke-linecap="round"/>
<path d="M1552.7 297.1V335.1" stroke="#cdcdcd" stroke-width="2"/>
<path d="M1560.2 295.5V334.5" stroke="#8e8e8e" stroke-width="4.2" stroke-linecap="round"/>
<path d="M1560.0 295.5V333.5" stroke="#cdcdcd" stroke-width="2"/>
<path d="M1567.3 293.9V332.5" stroke="#8e8e8e" stroke-width="4.2" stroke-linecap="round"/>
<path d="M1567.1 293.9V331.5" stroke="#cdcdcd" stroke-width="2"/>
<path d="M1575.2 292.1V328.8" stroke="#8e8e8e" stroke-width="4.2" stroke-linecap="round"/>
<path d="M1575.0 292.1V327.8" stroke="#cdcdcd" stroke-width="2"/>
<path d="M1582.1 290.6V328.8" stroke="#8e8e8e" stroke-width="4.2" stroke-linecap="round"/>
<path d="M1581.9 290.6V327.8" stroke="#cdcdcd" stroke-width="2"/>
<path d="M1588.5 289.2V322.5" stroke="#8e8e8e" stroke-width="4.2" stroke-linecap="round"/>
<path d="M1588.3 289.2V321.5" stroke="#cdcdcd" stroke-width="2"/>
<path d="M1596.5 287.4V322.2" stroke="#8e8e8e" stroke-width="4.2" stroke-linecap="round"/>
<path d="M1596.3 287.4V321.2" stroke="#cdcdcd" stroke-width="2"/>
<path d="M1603.6 285.8V314.8" stroke="#8e8e8e" stroke-width="4.2" stroke-linecap="round"/>
<path d="M1603.4 285.8V313.8" stroke="#cdcdcd" stroke-width="2"/>
<path d="M1610.4 284.3V318.3" stroke="#8e8e8e" stroke-width="4.2" stroke-linecap="round"/>
<path d="M1610.2 284.3V317.3" stroke="#cdcdcd" stroke-width="2"/>
<path d="M1616.5 282.9V316.8" stroke="#8e8e8e" stroke-width="4.2" stroke-linecap="round"/>
<path d="M1616.3 282.9V315.8" stroke="#cdcdcd" stroke-width="2"/>
<path d="M1623.7 281.3V308.9" stroke="#8e8e8e" stroke-width="4.2" stroke-linecap="round"/>
<path d="M1623.5 281.3V307.9" stroke="#cdcdcd" stroke-width="2"/>
<path d="M1631.0 279.7V310.6" stroke="#8e8e8e" stroke-width="4.2" stroke-linecap="round"/>
<path d="M1630.8 279.7V309.6" stroke="#cdcdcd" stroke-width="2"/>
<polygon points="1385,155 1431,155 1431,100 1494,106 1631,120 1645,158 1634,253 1540,272 1514,281 1385,317" fill="#e06e4a"/>
<polygon points="1291,109 1431,100 1431,176 1385,158 1291,158" fill="#d9683f"/>
<path d="M1291 109L1431 100L1631 120" stroke="#8a4a36" stroke-width="1" fill="none"/>
<path d="M1300 130L1431 124" stroke="#a5553a" stroke-width="1" fill="none"/>
<polygon points="1493.6,107.5 1504.7,108.5 1504.7,280.6 1493.6,283.1" fill="#3a3b40"/>
<rect x="1495.6" y="142.6" width="7.1" height="31.6" fill="#85838a"/>
<rect x="1498.6" y="142.6" width="1.2" height="31.6" fill="#3a3b40"/>
<rect x="1495.6" y="195.3" width="7.1" height="28.1" fill="#85838a"/>
<rect x="1498.6" y="195.3" width="1.2" height="28.1" fill="#3a3b40"/>
<rect x="1495.6" y="240.9" width="7.1" height="28.1" fill="#85838a"/>
<rect x="1498.6" y="240.9" width="1.2" height="28.1" fill="#3a3b40"/>
<polygon points="1508,108.8 1519.4,109.8 1519.4,276.9 1508,279.4" fill="#3a3b40"/>
<rect x="1510.0" y="142.9" width="7.4" height="30.7" fill="#85838a"/>
<rect x="1513.1" y="142.9" width="1.2" height="30.7" fill="#3a3b40"/>
<rect x="1510.0" y="194.1" width="7.4" height="27.3" fill="#85838a"/>
<rect x="1513.1" y="194.1" width="1.2" height="27.3" fill="#3a3b40"/>
<rect x="1510.0" y="238.4" width="7.4" height="27.3" fill="#85838a"/>
<rect x="1513.1" y="238.4" width="1.2" height="27.3" fill="#3a3b40"/>
<polygon points="1523,110.1 1534,111.1 1534,273.0 1523,275.5" fill="#3a3b40"/>
<rect x="1525.0" y="143.2" width="7.0" height="29.8" fill="#85838a"/>
<rect x="1527.9" y="143.2" width="1.2" height="29.8" fill="#3a3b40"/>
<rect x="1525.0" y="192.8" width="7.0" height="26.5" fill="#85838a"/>
<rect x="1527.9" y="192.8" width="1.2" height="26.5" fill="#3a3b40"/>
<rect x="1525.0" y="235.8" width="7.0" height="26.5" fill="#85838a"/>
<rect x="1527.9" y="235.8" width="1.2" height="26.5" fill="#3a3b40"/>
<polygon points="1536,111.3 1547,112.3 1547,269.7 1536,272.2" fill="#3a3b40"/>
<rect x="1538.0" y="143.5" width="7.0" height="29.0" fill="#85838a"/>
<rect x="1540.9" y="143.5" width="1.2" height="29.0" fill="#3a3b40"/>
<rect x="1538.0" y="191.8" width="7.0" height="25.7" fill="#85838a"/>
<rect x="1540.9" y="191.8" width="1.2" height="25.7" fill="#3a3b40"/>
<rect x="1538.0" y="233.6" width="7.0" height="25.7" fill="#85838a"/>
<rect x="1540.9" y="233.6" width="1.2" height="25.7" fill="#3a3b40"/>
<polygon points="1551,112.7 1562,113.7 1562,265.8 1551,268.3" fill="#3a3b40"/>
<rect x="1553.0" y="143.8" width="7.0" height="28.0" fill="#85838a"/>
<rect x="1555.9" y="143.8" width="1.2" height="28.0" fill="#3a3b40"/>
<rect x="1553.0" y="190.5" width="7.0" height="24.9" fill="#85838a"/>
<rect x="1555.9" y="190.5" width="1.2" height="24.9" fill="#3a3b40"/>
<rect x="1553.0" y="231.0" width="7.0" height="24.9" fill="#85838a"/>
<rect x="1555.9" y="231.0" width="1.2" height="24.9" fill="#3a3b40"/>
<polygon points="1564,113.9 1575,114.9 1575,262.5 1564,265.0" fill="#3a3b40"/>
<rect x="1566.0" y="144.1" width="7.0" height="27.2" fill="#85838a"/>
<rect x="1568.9" y="144.1" width="1.2" height="27.2" fill="#3a3b40"/>
<rect x="1566.0" y="189.4" width="7.0" height="24.2" fill="#85838a"/>
<rect x="1568.9" y="189.4" width="1.2" height="24.2" fill="#3a3b40"/>
<rect x="1566.0" y="228.7" width="7.0" height="24.2" fill="#85838a"/>
<rect x="1568.9" y="228.7" width="1.2" height="24.2" fill="#3a3b40"/>
<polygon points="1577,115.1 1588,116.1 1588,259.2 1577,261.7" fill="#3a3b40"/>
<rect x="1579.0" y="144.4" width="7.0" height="26.4" fill="#85838a"/>
<rect x="1581.9" y="144.4" width="1.2" height="26.4" fill="#3a3b40"/>
<rect x="1579.0" y="188.4" width="7.0" height="23.5" fill="#85838a"/>
<rect x="1581.9" y="188.4" width="1.2" height="23.5" fill="#3a3b40"/>
<rect x="1579.0" y="226.5" width="7.0" height="23.5" fill="#85838a"/>
<rect x="1581.9" y="226.5" width="1.2" height="23.5" fill="#3a3b40"/>
<polygon points="1589.6,116.2 1600.6,117.2 1600.6,255.9 1589.6,258.4" fill="#3a3b40"/>
<rect x="1591.6" y="144.7" width="7.0" height="25.6" fill="#85838a"/>
<rect x="1594.5" y="144.7" width="1.2" height="25.6" fill="#3a3b40"/>
<rect x="1591.6" y="187.3" width="7.0" height="22.8" fill="#85838a"/>
<rect x="1594.5" y="187.3" width="1.2" height="22.8" fill="#3a3b40"/>
<rect x="1591.6" y="224.3" width="7.0" height="22.8" fill="#85838a"/>
<rect x="1594.5" y="224.3" width="1.2" height="22.8" fill="#3a3b40"/>
<rect x="1436" y="121" width="13" height="46" fill="#34353a"/>
<rect x="1438" y="146" width="9" height="19" fill="#97959a"/>
<rect x="1441.9" y="146" width="1.2" height="19" fill="#34353a"/>
<rect x="1454" y="121" width="13" height="46" fill="#34353a"/>
<rect x="1456" y="146" width="9" height="19" fill="#97959a"/>
<rect x="1459.9" y="146" width="1.2" height="19" fill="#34353a"/>
<rect x="1471" y="121" width="13" height="46" fill="#34353a"/>
<rect x="1473" y="146" width="9" height="19" fill="#97959a"/>
<rect x="1476.9" y="146" width="1.2" height="19" fill="#34353a"/>
<rect x="1599" y="132" width="7" height="31" fill="#34353a"/>
<rect x="1600.5" y="146" width="4" height="15" fill="#8d8b90"/>
<rect x="1608" y="132" width="8.5" height="31" fill="#34353a"/>
<rect x="1609.5" y="146" width="5.5" height="15" fill="#8d8b90"/>
<rect x="1618" y="132" width="8.5" height="31" fill="#34353a"/>
<rect x="1619.5" y="146" width="5.5" height="15" fill="#8d8b90"/>
<rect x="1434.5" y="174" width="6.0" height="118" fill="#3a3b40"/>
<rect x="1453" y="174" width="13" height="118" fill="#3a3b40"/>
<rect x="1455" y="190" width="9" height="26" fill="#97959a"/>
<rect x="1455" y="236" width="9" height="26" fill="#97959a"/>
<rect x="1455" y="272" width="9" height="20" fill="#97959a"/>
<rect x="1475" y="174" width="6" height="118" fill="#3a3b40"/>
<rect x="1603" y="170" width="6" height="80" fill="#3a3b40"/>
<rect x="1604.5" y="185" width="3" height="20" fill="#8d8b90"/>
<rect x="1604.5" y="215" width="3" height="20" fill="#8d8b90"/>
<rect x="1613" y="170" width="6" height="80" fill="#3a3b40"/>
<rect x="1614.5" y="185" width="3" height="20" fill="#8d8b90"/>
<rect x="1614.5" y="215" width="3" height="20" fill="#8d8b90"/>
<rect x="1624" y="170" width="6" height="80" fill="#3a3b40"/>
<rect x="1625.5" y="185" width="3" height="20" fill="#8d8b90"/>
<rect x="1625.5" y="215" width="3" height="20" fill="#8d8b90"/>
<polygon points="1385,218 1640,193 1640,198 1385,224" fill="#e6e3da"/>
<polygon points="1385,267 1640,223 1640,228 1385,273" fill="#e6e3da"/>
<polygon points="1385,317 1512,285 1512,322 1385,349" fill="#3c3d40"/>
<polygon points="1512,285 1540,272 1540,300 1512,322" fill="#454545"/>
<polygon points="1524,281 1540,279 1540,304 1524,306" fill="#d8d8d0"/>
<polygon points="1540,271 1634,254 1634,277 1540,298" fill="#3c3d40"/>
<polygon points="1385,349 1512,322 1512,327 1385,356" fill="#d5d5cc"/>
<polygon points="1540,298 1634,277 1634,281 1540,302" fill="#d5d5cc"/>
<polygon points="1515,250 1528,248 1528,290 1515,293" fill="#2d2e31"/>
<rect x="1473.3" y="319.4" width="1" height="1" fill="#aaa" opacity=".55"/>
<rect x="1566.6" y="267.7" width="1" height="1" fill="#aaa" opacity=".55"/>
<rect x="1402.7" y="334.3" width="1" height="1" fill="#aaa" opacity=".55"/>
<rect x="1621.1" y="262.7" width="1" height="1" fill="#aaa" opacity=".55"/>
<rect x="1498.4" y="309.8" width="1" height="1" fill="#aaa" opacity=".55"/>
<rect x="1465.4" y="309.8" width="1" height="1" fill="#aaa" opacity=".55"/>
<rect x="1463.7" y="310.4" width="1" height="1" fill="#aaa" opacity=".55"/>
<rect x="1460.7" y="311.4" width="1" height="1" fill="#aaa" opacity=".55"/>
<rect x="1574.9" y="266.3" width="1" height="1" fill="#aaa" opacity=".55"/>
<rect x="1565.9" y="274.7" width="1" height="1" fill="#aaa" opacity=".55"/>
<rect x="1441.9" y="329.6" width="1" height="1" fill="#aaa" opacity=".55"/>
<rect x="1445.8" y="308.8" width="1" height="1" fill="#aaa" opacity=".55"/>
<rect x="1493.3" y="314.6" width="1" height="1" fill="#aaa" opacity=".55"/>
<rect x="1412.6" y="321.0" width="1" height="1" fill="#aaa" opacity=".55"/>
<rect x="1468.8" y="324.6" width="1" height="1" fill="#aaa" opacity=".55"/>
<rect x="1494.1" y="319.9" width="1" height="1" fill="#aaa" opacity=".55"/>
<rect x="1429.0" y="317.6" width="1" height="1" fill="#aaa" opacity=".55"/>
<rect x="1545.4" y="293.0" width="1" height="1" fill="#aaa" opacity=".55"/>
<rect x="1497.2" y="297.5" width="1" height="1" fill="#aaa" opacity=".55"/>
<rect x="1417.3" y="326.4" width="1" height="1" fill="#aaa" opacity=".55"/>
<rect x="1434.2" y="331.4" width="1" height="1" fill="#aaa" opacity=".55"/>
<rect x="1590.9" y="267.0" width="1" height="1" fill="#aaa" opacity=".55"/>
<rect x="1455.4" y="326.7" width="1" height="1" fill="#aaa" opacity=".55"/>
<rect x="1543.3" y="291.4" width="1" height="1" fill="#aaa" opacity=".55"/>
<rect x="1471.6" y="300.5" width="1" height="1" fill="#aaa" opacity=".55"/>
<rect x="1458.7" y="325.6" width="1" height="1" fill="#aaa" opacity=".55"/>
<rect x="1453.6" y="312.0" width="1" height="1" fill="#aaa" opacity=".55"/>
<rect x="1488.9" y="306.1" width="1" height="1" fill="#aaa" opacity=".55"/>
<rect x="1487.1" y="323.6" width="1" height="1" fill="#aaa" opacity=".55"/>
<rect x="1425.8" y="307.9" width="1" height="1" fill="#aaa" opacity=".55"/>
<rect x="1616.3" y="277.3" width="1" height="1" fill="#aaa" opacity=".55"/>
<rect x="1626.8" y="265.6" width="1" height="1" fill="#aaa" opacity=".55"/>
<rect x="1617.9" y="278.0" width="1" height="1" fill="#aaa" opacity=".55"/>
<rect x="1441.7" y="327.7" width="1" height="1" fill="#aaa" opacity=".55"/>
<rect x="1590.5" y="278.0" width="1" height="1" fill="#aaa" opacity=".55"/>
<rect x="1457.9" y="310.8" width="1" height="1" fill="#aaa" opacity=".55"/>
<rect x="1443.0" y="305.6" width="1" height="1" fill="#aaa" opacity=".55"/>
<rect x="1457.5" y="326.4" width="1" height="1" fill="#aaa" opacity=".55"/>
<rect x="1398.9" y="342.1" width="1" height="1" fill="#aaa" opacity=".55"/>
<rect x="1555.9" y="291.6" width="1" height="1" fill="#aaa" opacity=".55"/>
<rect x="1605.0" y="280.3" width="1" height="1" fill="#aaa" opacity=".55"/>
<rect x="1391.2" y="339.0" width="1" height="1" fill="#aaa" opacity=".55"/>
<rect x="1429.6" y="316.3" width="1" height="1" fill="#aaa" opacity=".55"/>
<rect x="1548.4" y="283.4" width="1" height="1" fill="#aaa" opacity=".55"/>
<rect x="1488.1" y="324.0" width="1" height="1" fill="#aaa" opacity=".55"/>
<rect x="1470.6" y="304.9" width="1" height="1" fill="#aaa" opacity=".55"/>
<rect x="1596.5" y="272.6" width="1" height="1" fill="#aaa" opacity=".55"/>
<rect x="1577.3" y="273.5" width="1" height="1" fill="#aaa" opacity=".55"/>
<rect x="1435.8" y="322.3" width="1" height="1" fill="#aaa" opacity=".55"/>
<rect x="1585.7" y="267.7" width="1" height="1" fill="#aaa" opacity=".55"/>
<rect x="1579.6" y="286.3" width="1" height="1" fill="#aaa" opacity=".55"/>
<rect x="1583.1" y="283.3" width="1" height="1" fill="#aaa" opacity=".55"/>
<rect x="1389.8" y="335.8" width="1" height="1" fill="#aaa" opacity=".55"/>
<rect x="1596.7" y="262.9" width="1" height="1" fill="#aaa" opacity=".55"/>
<polygon points="1047,156 1385,154 1385,318 1060,264" fill="#2d2e31"/>
<polygon points="1047.0,156.5 1054.0,156.5 1061.8,265.1 1058.0,264.0" fill="#df6d48"/>
<polygon points="1057.0,156.5 1062.0,156.5 1066.2,266.4 1063.5,265.6" fill="#df6d48"/>
<polygon points="1068.0,156.5 1073.0,156.5 1073.0,268.1 1069.5,267.3" fill="#df6d48"/>
<polygon points="1076.0,156.5 1081.0,156.5 1081.0,269.4 1076.0,268.6" fill="#df6d48"/>
<polygon points="1089.0,156.5 1095.0,156.5 1095.0,271.6 1089.0,270.6" fill="#df6d48"/>
<polygon points="1099.0,156.5 1105.0,156.5 1105.0,273.2 1099.0,272.2" fill="#df6d48"/>
<polygon points="1109.0,156.5 1114.0,156.5 1114.0,274.6 1109.0,273.8" fill="#df6d48"/>
<polygon points="1125.0,156.5 1131.0,156.5 1131.0,277.3 1125.0,276.3" fill="#df6d48"/>
<polygon points="1141.0,156.5 1147.0,156.5 1147.0,279.8 1141.0,278.9" fill="#df6d48"/>
<polygon points="1158.0,156.5 1164.0,156.5 1164.0,282.5 1158.0,281.6" fill="#df6d48"/>
<polygon points="1175.0,156.5 1180.0,156.5 1180.0,285.1 1175.0,284.3" fill="#df6d48"/>
<polygon points="1191.0,156.5 1197.0,156.5 1197.0,287.7 1191.0,286.8" fill="#df6d48"/>
<polygon points="1202.0,156.5 1213.0,156.5 1213.0,290.3 1202.0,288.5" fill="#df6d48"/>
<polygon points="1228.0,156.5 1235.0,156.5 1235.0,293.8 1228.0,292.6" fill="#df6d48"/>
<polygon points="1248.0,156.5 1254.0,156.5 1254.0,296.8 1248.0,295.8" fill="#df6d48"/>
<polygon points="1269.0,156.5 1276.0,156.5 1276.0,300.2 1269.0,299.1" fill="#df6d48"/>
<polygon points="1284.0,156.5 1291.0,156.5 1291.0,302.6 1284.0,301.5" fill="#df6d48"/>
<polygon points="1308.0,156.5 1326.5,156.5 1326.5,308.2 1308.0,305.3" fill="#df6d48"/>
<polygon points="1344.0,156.5 1352.0,156.5 1352.0,312.3 1344.0,311.0" fill="#df6d48"/>
<polygon points="1361.0,156.5 1385.0,156.5 1385.0,317.5 1361.0,313.7" fill="#df6d48"/>
<rect x="1064.1" y="174.0" width="2.8" height="22.2" fill="#a3a1a5"/>
<rect x="1064.1" y="179.5" width="2.8" height="1" fill="#2d2e31"/>
<rect x="1065.0" y="209.6" width="2.8" height="20.3" fill="#a3a1a5"/>
<rect x="1065.0" y="214.7" width="2.8" height="1" fill="#2d2e31"/>
<rect x="1065.9" y="244.0" width="2.8" height="18.9" fill="#a3a1a5"/>
<rect x="1065.9" y="248.7" width="2.8" height="1" fill="#2d2e31"/>
<rect x="1082.6" y="174.5" width="4.8" height="22.9" fill="#a3a1a5"/>
<rect x="1082.6" y="180.3" width="4.8" height="1" fill="#2d2e31"/>
<rect x="1082.6" y="211.1" width="4.8" height="20.8" fill="#a3a1a5"/>
<rect x="1082.6" y="216.4" width="4.8" height="1" fill="#2d2e31"/>
<rect x="1082.6" y="246.4" width="4.8" height="19.6" fill="#a3a1a5"/>
<rect x="1082.6" y="251.3" width="4.8" height="1" fill="#2d2e31"/>
<rect x="1096.6" y="174.9" width="0.8" height="23.4" fill="#a3a1a5"/>
<rect x="1096.6" y="180.7" width="0.8" height="1" fill="#2d2e31"/>
<rect x="1096.6" y="212.1" width="0.8" height="21.2" fill="#a3a1a5"/>
<rect x="1096.6" y="217.4" width="0.8" height="1" fill="#2d2e31"/>
<rect x="1096.6" y="247.8" width="0.8" height="20.1" fill="#a3a1a5"/>
<rect x="1096.6" y="252.9" width="0.8" height="1" fill="#2d2e31"/>
<rect x="1106.6" y="175.2" width="0.8" height="23.8" fill="#a3a1a5"/>
<rect x="1106.6" y="181.1" width="0.8" height="1" fill="#2d2e31"/>
<rect x="1106.6" y="212.9" width="0.8" height="21.4" fill="#a3a1a5"/>
<rect x="1106.6" y="218.2" width="0.8" height="1" fill="#2d2e31"/>
<rect x="1106.6" y="249.1" width="0.8" height="20.4" fill="#a3a1a5"/>
<rect x="1106.6" y="254.2" width="0.8" height="1" fill="#2d2e31"/>
<rect x="1115.6" y="175.5" width="7.8" height="24.2" fill="#a3a1a5"/>
<rect x="1118.8" y="175.5" width="1.4" height="24.2" fill="#2d2e31"/>
<rect x="1115.6" y="181.5" width="7.8" height="1" fill="#2d2e31"/>
<rect x="1115.6" y="213.9" width="7.8" height="21.8" fill="#a3a1a5"/>
<rect x="1118.8" y="213.9" width="1.4" height="21.8" fill="#2d2e31"/>
<rect x="1115.6" y="219.3" width="7.8" height="1" fill="#2d2e31"/>
<rect x="1115.6" y="250.6" width="7.8" height="20.9" fill="#a3a1a5"/>
<rect x="1118.8" y="250.6" width="1.4" height="20.9" fill="#2d2e31"/>
<rect x="1115.6" y="255.8" width="7.8" height="1" fill="#2d2e31"/>
<rect x="1132.6" y="175.9" width="6.8" height="24.8" fill="#a3a1a5"/>
<rect x="1135.3" y="175.9" width="1.4" height="24.8" fill="#2d2e31"/>
<rect x="1132.6" y="182.2" width="6.8" height="1" fill="#2d2e31"/>
<rect x="1132.6" y="215.1" width="6.8" height="22.2" fill="#a3a1a5"/>
<rect x="1135.3" y="215.1" width="1.4" height="22.2" fill="#2d2e31"/>
<rect x="1132.6" y="220.7" width="6.8" height="1" fill="#2d2e31"/>
<rect x="1132.6" y="252.6" width="6.8" height="21.5" fill="#a3a1a5"/>
<rect x="1135.3" y="252.6" width="1.4" height="21.5" fill="#2d2e31"/>
<rect x="1132.6" y="258.0" width="6.8" height="1" fill="#2d2e31"/>
<rect x="1148.6" y="176.4" width="7.8" height="25.5" fill="#a3a1a5"/>
<rect x="1151.8" y="176.4" width="1.4" height="25.5" fill="#2d2e31"/>
<rect x="1148.6" y="182.8" width="7.8" height="1" fill="#2d2e31"/>
<rect x="1148.6" y="216.4" width="7.8" height="22.6" fill="#a3a1a5"/>
<rect x="1151.8" y="216.4" width="1.4" height="22.6" fill="#2d2e31"/>
<rect x="1148.6" y="222.1" width="7.8" height="1" fill="#2d2e31"/>
<rect x="1148.6" y="254.6" width="7.8" height="22.1" fill="#a3a1a5"/>
<rect x="1151.8" y="254.6" width="1.4" height="22.1" fill="#2d2e31"/>
<rect x="1148.6" y="260.1" width="7.8" height="1" fill="#2d2e31"/>
<rect x="1165.6" y="176.9" width="7.8" height="26.1" fill="#a3a1a5"/>
<rect x="1168.8" y="176.9" width="1.4" height="26.1" fill="#2d2e31"/>
<rect x="1165.6" y="183.4" width="7.8" height="1" fill="#2d2e31"/>
<rect x="1165.6" y="217.8" width="7.8" height="23.1" fill="#a3a1a5"/>
<rect x="1168.8" y="217.8" width="1.4" height="23.1" fill="#2d2e31"/>
<rect x="1165.6" y="223.5" width="7.8" height="1" fill="#2d2e31"/>
<rect x="1165.6" y="256.6" width="7.8" height="22.8" fill="#a3a1a5"/>
<rect x="1168.8" y="256.6" width="1.4" height="22.8" fill="#2d2e31"/>
<rect x="1165.6" y="262.3" width="7.8" height="1" fill="#2d2e31"/>
<rect x="1181.6" y="177.3" width="7.8" height="26.7" fill="#a3a1a5"/>
<rect x="1184.8" y="177.3" width="1.4" height="26.7" fill="#2d2e31"/>
<rect x="1181.6" y="184.0" width="7.8" height="1" fill="#2d2e31"/>
<rect x="1181.6" y="219.0" width="7.8" height="23.5" fill="#a3a1a5"/>
<rect x="1184.8" y="219.0" width="1.4" height="23.5" fill="#2d2e31"/>
<rect x="1181.6" y="224.9" width="7.8" height="1" fill="#2d2e31"/>
<rect x="1181.6" y="258.6" width="7.8" height="23.3" fill="#a3a1a5"/>
<rect x="1184.8" y="258.6" width="1.4" height="23.3" fill="#2d2e31"/>
<rect x="1181.6" y="264.4" width="7.8" height="1" fill="#2d2e31"/>
<rect x="1198.6" y="177.7" width="1.8" height="27.2" fill="#a3a1a5"/>
<rect x="1198.6" y="184.5" width="1.8" height="1" fill="#2d2e31"/>
<rect x="1198.6" y="220.1" width="1.8" height="23.9" fill="#a3a1a5"/>
<rect x="1198.6" y="226.1" width="1.8" height="1" fill="#2d2e31"/>
<rect x="1198.6" y="260.3" width="1.8" height="23.9" fill="#a3a1a5"/>
<rect x="1198.6" y="266.2" width="1.8" height="1" fill="#2d2e31"/>
<rect x="1214.6" y="178.3" width="11.8" height="28.0" fill="#a3a1a5"/>
<rect x="1219.8" y="178.3" width="1.4" height="28.0" fill="#2d2e31"/>
<rect x="1214.6" y="185.3" width="11.8" height="1" fill="#2d2e31"/>
<rect x="1214.6" y="221.8" width="11.8" height="24.4" fill="#a3a1a5"/>
<rect x="1219.8" y="221.8" width="1.4" height="24.4" fill="#2d2e31"/>
<rect x="1214.6" y="227.9" width="11.8" height="1" fill="#2d2e31"/>
<rect x="1214.6" y="262.8" width="11.8" height="24.6" fill="#a3a1a5"/>
<rect x="1219.8" y="262.8" width="1.4" height="24.6" fill="#2d2e31"/>
<rect x="1214.6" y="269.0" width="11.8" height="1" fill="#2d2e31"/>
<rect x="1236.6" y="178.8" width="9.8" height="28.8" fill="#a3a1a5"/>
<rect x="1240.8" y="178.8" width="1.4" height="28.8" fill="#2d2e31"/>
<rect x="1236.6" y="186.0" width="9.8" height="1" fill="#2d2e31"/>
<rect x="1236.6" y="223.4" width="9.8" height="25.0" fill="#a3a1a5"/>
<rect x="1240.8" y="223.4" width="1.4" height="25.0" fill="#2d2e31"/>
<rect x="1236.6" y="229.7" width="9.8" height="1" fill="#2d2e31"/>
<rect x="1236.6" y="265.4" width="9.8" height="25.4" fill="#a3a1a5"/>
<rect x="1240.8" y="265.4" width="1.4" height="25.4" fill="#2d2e31"/>
<rect x="1236.6" y="271.7" width="9.8" height="1" fill="#2d2e31"/>
<rect x="1255.6" y="179.4" width="11.8" height="29.6" fill="#a3a1a5"/>
<rect x="1260.8" y="179.4" width="1.4" height="29.6" fill="#2d2e31"/>
<rect x="1255.6" y="186.8" width="11.8" height="1" fill="#2d2e31"/>
<rect x="1255.6" y="225.0" width="11.8" height="25.5" fill="#a3a1a5"/>
<rect x="1260.8" y="225.0" width="1.4" height="25.5" fill="#2d2e31"/>
<rect x="1255.6" y="231.4" width="11.8" height="1" fill="#2d2e31"/>
<rect x="1255.6" y="267.8" width="11.8" height="26.2" fill="#a3a1a5"/>
<rect x="1260.8" y="267.8" width="1.4" height="26.2" fill="#2d2e31"/>
<rect x="1255.6" y="274.3" width="11.8" height="1" fill="#2d2e31"/>
<rect x="1277.6" y="179.9" width="4.8" height="30.3" fill="#a3a1a5"/>
<rect x="1277.6" y="187.5" width="4.8" height="1" fill="#2d2e31"/>
<rect x="1277.6" y="226.4" width="4.8" height="26.0" fill="#a3a1a5"/>
<rect x="1277.6" y="233.0" width="4.8" height="1" fill="#2d2e31"/>
<rect x="1277.6" y="270.0" width="4.8" height="26.8" fill="#a3a1a5"/>
<rect x="1277.6" y="276.8" width="4.8" height="1" fill="#2d2e31"/>
<rect x="1292.6" y="180.4" width="13.8" height="31.0" fill="#a3a1a5"/>
<rect x="1298.8" y="180.4" width="1.4" height="31.0" fill="#2d2e31"/>
<rect x="1292.6" y="188.2" width="13.8" height="1" fill="#2d2e31"/>
<rect x="1292.6" y="228.0" width="13.8" height="26.5" fill="#a3a1a5"/>
<rect x="1298.8" y="228.0" width="1.4" height="26.5" fill="#2d2e31"/>
<rect x="1292.6" y="234.6" width="13.8" height="1" fill="#2d2e31"/>
<rect x="1292.6" y="272.4" width="13.8" height="27.6" fill="#a3a1a5"/>
<rect x="1298.8" y="272.4" width="1.4" height="27.6" fill="#2d2e31"/>
<rect x="1292.6" y="279.3" width="13.8" height="1" fill="#2d2e31"/>
<rect x="1328.1" y="181.4" width="14.3" height="32.4" fill="#a3a1a5"/>
<rect x="1334.5" y="181.4" width="1.4" height="32.4" fill="#2d2e31"/>
<rect x="1328.1" y="189.5" width="14.3" height="1" fill="#2d2e31"/>
<rect x="1328.1" y="230.8" width="14.3" height="27.5" fill="#a3a1a5"/>
<rect x="1334.5" y="230.8" width="1.4" height="27.5" fill="#2d2e31"/>
<rect x="1328.1" y="237.7" width="14.3" height="1" fill="#2d2e31"/>
<rect x="1328.1" y="276.8" width="14.3" height="28.9" fill="#a3a1a5"/>
<rect x="1334.5" y="276.8" width="1.4" height="28.9" fill="#2d2e31"/>
<rect x="1328.1" y="284.0" width="14.3" height="1" fill="#2d2e31"/>
<rect x="1353.6" y="182.0" width="5.8" height="33.2" fill="#a3a1a5"/>
<rect x="1355.8" y="182.0" width="1.4" height="33.2" fill="#2d2e31"/>
<rect x="1353.6" y="190.3" width="5.8" height="1" fill="#2d2e31"/>
<rect x="1353.6" y="232.5" width="5.8" height="28.1" fill="#a3a1a5"/>
<rect x="1355.8" y="232.5" width="1.4" height="28.1" fill="#2d2e31"/>
<rect x="1353.6" y="239.5" width="5.8" height="1" fill="#2d2e31"/>
<rect x="1353.6" y="279.3" width="5.8" height="29.7" fill="#a3a1a5"/>
<rect x="1355.8" y="279.3" width="1.4" height="29.7" fill="#2d2e31"/>
<rect x="1353.6" y="286.7" width="5.8" height="1" fill="#2d2e31"/>
<polygon points="1047,197.0 1385,219.0 1385,226.0 1047,202.0" fill="#e4e1d8"/>
<polygon points="1055,230.84023668639054 1385,265.5 1385,273.0 1055,236.38757396449705" fill="#e4e1d8"/>
<path d="M1047 156L1385 154" stroke="#777" stroke-width="1.5"/>
<path d="M1384.5 154V318" stroke="#8a8a8a" stroke-width="1"/>
<path d="M1122 156V138" stroke="#888" stroke-width="1"/>
<path d="M1166 156V142" stroke="#888" stroke-width="1"/>
<path d="M1180 156V140" stroke="#888" stroke-width="1"/>
<path d="M1215 156V138" stroke="#888" stroke-width="1"/>
<path d="M1232 156V142" stroke="#888" stroke-width="1"/>
<path d="M1248 156V136" stroke="#888" stroke-width="1"/>
<path d="M1270 156V140" stroke="#888" stroke-width="1"/>
<path d="M1286 156V142" stroke="#888" stroke-width="1"/>
<path d="M1398 102.12142857142857V84.12142857142857" stroke="#888" stroke-width="1"/>
<path d="M1462 103.1V81.1" stroke="#888" stroke-width="1"/>
<path d="M1557 112.6V100.6" stroke="#888" stroke-width="1"/>
<path d="M1582 115.1V103.1" stroke="#888" stroke-width="1"/>
<polygon points="1058,264 1385,318 1385,349 1060,285" fill="#3c3d40"/>
<rect x="1150.5" y="286.2" width="1" height="1" fill="#aaa" opacity=".55"/>
<rect x="1231.1" y="303.7" width="1" height="1" fill="#aaa" opacity=".55"/>
<rect x="1214.0" y="309.0" width="1" height="1" fill="#aaa" opacity=".55"/>
<rect x="1065.6" y="267.9" width="1" height="1" fill="#aaa" opacity=".55"/>
<rect x="1105.0" y="275.6" width="1" height="1" fill="#aaa" opacity=".55"/>
<rect x="1086.6" y="288.7" width="1" height="1" fill="#aaa" opacity=".55"/>
<rect x="1334.2" y="312.3" width="1" height="1" fill="#aaa" opacity=".55"/>
<rect x="1223.2" y="299.7" width="1" height="1" fill="#aaa" opacity=".55"/>
<rect x="1164.1" y="290.3" width="1" height="1" fill="#aaa" opacity=".55"/>
<rect x="1268.8" y="314.5" width="1" height="1" fill="#aaa" opacity=".55"/>
<rect x="1178.7" y="289.3" width="1" height="1" fill="#aaa" opacity=".55"/>
<rect x="1168.6" y="286.1" width="1" height="1" fill="#aaa" opacity=".55"/>
<rect x="1240.0" y="312.4" width="1" height="1" fill="#aaa" opacity=".55"/>
<rect x="1184.8" y="287.8" width="1" height="1" fill="#aaa" opacity=".55"/>
<rect x="1121.2" y="283.4" width="1" height="1" fill="#aaa" opacity=".55"/>
<rect x="1255.4" y="317.0" width="1" height="1" fill="#aaa" opacity=".55"/>
<rect x="1184.8" y="304.1" width="1" height="1" fill="#aaa" opacity=".55"/>
<rect x="1261.2" y="309.2" width="1" height="1" fill="#aaa" opacity=".55"/>
<rect x="1182.3" y="296.7" width="1" height="1" fill="#aaa" opacity=".55"/>
<rect x="1286.4" y="313.3" width="1" height="1" fill="#aaa" opacity=".55"/>
<rect x="1283.6" y="313.9" width="1" height="1" fill="#aaa" opacity=".55"/>
<rect x="1142.2" y="290.4" width="1" height="1" fill="#aaa" opacity=".55"/>
<rect x="1284.0" y="303.7" width="1" height="1" fill="#aaa" opacity=".55"/>
<rect x="1198.8" y="298.1" width="1" height="1" fill="#aaa" opacity=".55"/>
<rect x="1342.1" y="337.7" width="1" height="1" fill="#aaa" opacity=".55"/>
<rect x="1182.9" y="305.9" width="1" height="1" fill="#aaa" opacity=".55"/>
<rect x="1314.1" y="313.8" width="1" height="1" fill="#aaa" opacity=".55"/>
<rect x="1211.2" y="293.1" width="1" height="1" fill="#aaa" opacity=".55"/>
<rect x="1321.2" y="326.1" width="1" height="1" fill="#aaa" opacity=".55"/>
<rect x="1344.5" y="334.1" width="1" height="1" fill="#aaa" opacity=".55"/>
<rect x="1275.3" y="319.5" width="1" height="1" fill="#aaa" opacity=".55"/>
<rect x="1242.6" y="297.8" width="1" height="1" fill="#aaa" opacity=".55"/>
<rect x="1250.1" y="296.5" width="1" height="1" fill="#aaa" opacity=".55"/>
<rect x="1110.2" y="289.4" width="1" height="1" fill="#aaa" opacity=".55"/>
<rect x="1079.0" y="270.8" width="1" height="1" fill="#aaa" opacity=".55"/>
<rect x="1096.3" y="288.8" width="1" height="1" fill="#aaa" opacity=".55"/>
<rect x="1121.4" y="276.3" width="1" height="1" fill="#aaa" opacity=".55"/>
<rect x="1330.1" y="312.6" width="1" height="1" fill="#aaa" opacity=".55"/>
<rect x="1330.8" y="328.2" width="1" height="1" fill="#aaa" opacity=".55"/>
<rect x="1328.4" y="335.5" width="1" height="1" fill="#aaa" opacity=".55"/>
<rect x="1247.4" y="315.9" width="1" height="1" fill="#aaa" opacity=".55"/>
<rect x="1076.4" y="282.9" width="1" height="1" fill="#aaa" opacity=".55"/>
<rect x="1226.1" y="309.8" width="1" height="1" fill="#aaa" opacity=".55"/>
<rect x="1098.6" y="286.7" width="1" height="1" fill="#aaa" opacity=".55"/>
<rect x="1359.4" y="315.7" width="1" height="1" fill="#aaa" opacity=".55"/>
<rect x="1167.1" y="295.5" width="1" height="1" fill="#aaa" opacity=".55"/>
<rect x="1325.8" y="315.3" width="1" height="1" fill="#aaa" opacity=".55"/>
<rect x="1121.6" y="280.9" width="1" height="1" fill="#aaa" opacity=".55"/>
<rect x="1259.0" y="316.9" width="1" height="1" fill="#aaa" opacity=".55"/>
<rect x="1189.0" y="295.0" width="1" height="1" fill="#aaa" opacity=".55"/>
<rect x="1189.9" y="294.8" width="1" height="1" fill="#aaa" opacity=".55"/>
<rect x="1196.7" y="289.8" width="1" height="1" fill="#aaa" opacity=".55"/>
<rect x="1222.6" y="315.4" width="1" height="1" fill="#aaa" opacity=".55"/>
<rect x="1195.0" y="304.8" width="1" height="1" fill="#aaa" opacity=".55"/>
<rect x="1115.6" y="288.7" width="1" height="1" fill="#aaa" opacity=".55"/>
<rect x="1303.2" y="323.1" width="1" height="1" fill="#aaa" opacity=".55"/>
<rect x="1227.9" y="304.6" width="1" height="1" fill="#aaa" opacity=".55"/>
<rect x="1267.5" y="322.2" width="1" height="1" fill="#aaa" opacity=".55"/>
<rect x="1112.0" y="276.2" width="1" height="1" fill="#aaa" opacity=".55"/>
<rect x="1300.7" y="329.2" width="1" height="1" fill="#aaa" opacity=".55"/>
<rect x="1227.9" y="303.6" width="1" height="1" fill="#aaa" opacity=".55"/>
<rect x="1291.5" y="308.0" width="1" height="1" fill="#aaa" opacity=".55"/>
<rect x="1149.2" y="284.5" width="1" height="1" fill="#aaa" opacity=".55"/>
<rect x="1249.5" y="304.2" width="1" height="1" fill="#aaa" opacity=".55"/>
<rect x="1138.2" y="292.9" width="1" height="1" fill="#aaa" opacity=".55"/>
<rect x="1365.3" y="323.5" width="1" height="1" fill="#aaa" opacity=".55"/>
<rect x="1287.2" y="313.3" width="1" height="1" fill="#aaa" opacity=".55"/>
<rect x="1333.9" y="326.3" width="1" height="1" fill="#aaa" opacity=".55"/>
<rect x="1149.2" y="284.9" width="1" height="1" fill="#aaa" opacity=".55"/>
<rect x="1072.3" y="276.8" width="1" height="1" fill="#aaa" opacity=".55"/>
<rect x="1185.6" y="290.0" width="1" height="1" fill="#aaa" opacity=".55"/>
<rect x="1178.5" y="292.2" width="1" height="1" fill="#aaa" opacity=".55"/>
<rect x="1308.9" y="309.7" width="1" height="1" fill="#aaa" opacity=".55"/>
<rect x="1377.2" y="331.0" width="1" height="1" fill="#aaa" opacity=".55"/>
<rect x="1253.7" y="308.8" width="1" height="1" fill="#aaa" opacity=".55"/>
<rect x="1327.9" y="331.8" width="1" height="1" fill="#aaa" opacity=".55"/>
<rect x="1240.5" y="306.7" width="1" height="1" fill="#aaa" opacity=".55"/>
<rect x="1292.0" y="325.9" width="1" height="1" fill="#aaa" opacity=".55"/>
<rect x="1191.1" y="303.7" width="1" height="1" fill="#aaa" opacity=".55"/>
<rect x="1367.5" y="328.9" width="1" height="1" fill="#aaa" opacity=".55"/>
<rect x="1137.3" y="283.3" width="1" height="1" fill="#aaa" opacity=".55"/>
<rect x="1291.1" y="320.9" width="1" height="1" fill="#aaa" opacity=".55"/>
<rect x="1367.0" y="340.2" width="1" height="1" fill="#aaa" opacity=".55"/>
<rect x="1141.3" y="283.0" width="1" height="1" fill="#aaa" opacity=".55"/>
<rect x="1146.5" y="283.8" width="1" height="1" fill="#aaa" opacity=".55"/>
<rect x="1287.0" y="325.0" width="1" height="1" fill="#aaa" opacity=".55"/>
<rect x="1348.4" y="319.5" width="1" height="1" fill="#aaa" opacity=".55"/>
<rect x="1337.5" y="319.3" width="1" height="1" fill="#aaa" opacity=".55"/>
<rect x="1198.3" y="305.0" width="1" height="1" fill="#aaa" opacity=".55"/>
<rect x="1092.1" y="272.9" width="1" height="1" fill="#aaa" opacity=".55"/>
<rect x="1327.7" y="317.0" width="1" height="1" fill="#aaa" opacity=".55"/>
<rect x="1177.3" y="297.7" width="1" height="1" fill="#aaa" opacity=".55"/>
<rect x="1277.8" y="301.0" width="1" height="1" fill="#aaa" opacity=".55"/>
<rect x="1170.5" y="293.3" width="1" height="1" fill="#aaa" opacity=".55"/>
<rect x="1218.1" y="296.3" width="1" height="1" fill="#aaa" opacity=".55"/>
<rect x="1249.3" y="320.2" width="1" height="1" fill="#aaa" opacity=".55"/>
<rect x="1188.1" y="298.9" width="1" height="1" fill="#aaa" opacity=".55"/>
<rect x="1102.5" y="278.2" width="1" height="1" fill="#aaa" opacity=".55"/>
<rect x="1274.6" y="303.3" width="1" height="1" fill="#aaa" opacity=".55"/>
<rect x="1344.5" y="337.4" width="1" height="1" fill="#aaa" opacity=".55"/>
<rect x="1095.5" y="289.9" width="1" height="1" fill="#aaa" opacity=".55"/>
<rect x="1182.9" y="303.1" width="1" height="1" fill="#aaa" opacity=".55"/>
<rect x="1303.6" y="312.9" width="1" height="1" fill="#aaa" opacity=".55"/>
<rect x="1277.9" y="317.9" width="1" height="1" fill="#aaa" opacity=".55"/>
<rect x="1318.9" y="314.7" width="1" height="1" fill="#aaa" opacity=".55"/>
<rect x="1302.6" y="330.7" width="1" height="1" fill="#aaa" opacity=".55"/>
<rect x="1276.9" y="314.7" width="1" height="1" fill="#aaa" opacity=".55"/>
<rect x="1100.7" y="282.1" width="1" height="1" fill="#aaa" opacity=".55"/>
<rect x="1175.9" y="300.5" width="1" height="1" fill="#aaa" opacity=".55"/>
<rect x="1278.7" y="315.8" width="1" height="1" fill="#aaa" opacity=".55"/>
<polygon points="1060,285 1385,349 1385,356 1060,291" fill="#cfcfc6"/>
<polygon points="1050,271.5 1062,271.5 1062,274 1051,274" fill="#666"/>
<polygon points="1087,266 1104,263 1112,264 1112,274 1096,280 1088,279" fill="#6a6a6a"/>
<polygon points="1595,259 1609,258 1606,276 1580,280" fill="#666"/>
<polygon points="1440,296 1453,294 1452,310 1418,327 1412,322" fill="#666"/>
<polygon points="1410,266 1460,259 1460,265 1410,272" fill="#2a2b2e"/>
<polygon points="1588,240 1625,234 1625,240 1588,246" fill="#2a2b2e"/>
<path d="M1328 172V183" stroke="#1133ff" stroke-width="1.2"/><path d="M1328 183H1338" stroke="#18c018" stroke-width="1.2"/><path d="M1320 183H1328" stroke="#e01010" stroke-width="1.2"/>
<path d="M992 295V267" stroke="#0000ee" stroke-width="1.6"/><polygon points="989,271 992,262 995,271" fill="#0000ee"/>
<path d="M990 297L975 303" stroke="#ee0000" stroke-width="1.6"/><polygon points="971,305 979,299 980,304" fill="#ee0000"/>
<path d="M994 297L1010 301" stroke="#00cc00" stroke-width="1.6"/><polygon points="1016,303 1007,298 1007,304" fill="#00cc00"/>
<circle cx="992" cy="296" r="4" fill="#a8a8a8"/>
<text x="992" y="262" font-size="10" font-family="Liberation Sans" fill="#0000ee" text-anchor="middle">Z</text>
<text x="967" y="306" font-size="10" font-family="Liberation Sans" fill="#ee0000" text-anchor="middle">X</text>
<text x="1026" y="304" font-size="10" font-family="Liberation Sans" fill="#00cc00" text-anchor="middle">Y</text>
<polygon points="1681,88 1719,82 1759,87 1723.5,94" fill="#ffffff" stroke="#333" stroke-width="1"/>
<polygon points="1681,88 1723.5,94 1723.5,158.6 1685,137" fill="#fbfbfb" stroke="#333" stroke-width="1"/>
<polygon points="1723.5,94 1759,87 1755,135 1723.5,158.6" fill="#f5f5f5" stroke="#333" stroke-width="1"/>
<text x="0" y="4" font-size="11.5" font-family="Liberation Sans" fill="#8a8a8a" text-anchor="middle" transform="translate(1702 120) rotate(16) scale(0.62 1)">Справа</text>
<text x="0" y="4" font-size="11.5" font-family="Liberation Sans" fill="#8a8a8a" text-anchor="middle" transform="translate(1740 121) rotate(-24) scale(0.62 1)">Сзади</text>
</svg>
<div class="a" style="left:942px;top:38px;width:32px;height:32px;background:#555555"></div>
<svg style="left:942px;top:38px" width="32" height="32" viewBox="0 0 32 32">
 <path d="M4.8 10V4.8H10M22 4.8h5.2V10M27.2 22v5.2H22M10 27.2H4.8V22" fill="none" stroke="#e6e6e6" stroke-width="1.6"/>
 <polygon points="16,10.3 21,13.2 21,18.8 16,21.7 11,18.8 11,13.2" fill="#e0e0e0"/>
</svg>
<!-- collisions panel -->
<div class="a" style="left:942px;top:426px;width:846px;height:387px;background:#fff;border-radius:4px 4px 0 0;overflow:hidden">
  <div class="a" style="left:0;top:0;width:846px;height:37px;background:#555555"></div>
  <div class="a" style="left:60px;top:37px;width:786px;height:32px;background:#666666;border-left:1px solid #4a4a4a;border-bottom:1px solid #4a4a4a;border-radius:0 0 0 2px"></div>
  <div class="a" style="left:0;top:68px;width:60px;height:1px;background:#e2e2e2"></div>
  <div class="a" style="left:150px;top:37px;width:1px;height:31px;background:#505050"></div>
  <div class="a" style="left:436px;top:37px;width:1px;height:31px;background:#505050"></div>
  <div class="a" style="left:628px;top:37px;width:1px;height:31px;background:#505050"></div>
</div>
<div class="a" style="left:1365px;top:432px;width:42px;height:2px;background:#3b95b5"></div>
<svg style="left:953px;top:437px" width="20" height="20" viewBox="0 0 20 20">
  <g fill="#e6e6e6"><rect x="2" y="2.6" width="13.3" height="1.7"/><rect x="2" y="6.6" width="13.3" height="1.7"/><rect x="2" y="10.6" width="9" height="1.7"/>
  <path d="M13 10.8l4.3 2.8-4.3 2.8z"/></g>
</svg>
<div class="t" style="left:986px;top:439px;font-size:14.3px;line-height:17px;color:#e6e6e6">Коллизии (количество: 0)</div>
<!-- header icons -->
<svg style="left:1614px;top:434px" width="24" height="24" viewBox="0 0 24 24">
  <g fill="none" stroke="#e6e6e6" stroke-width="1.7"><path d="M9.5 14.5H4.8a1.3 1.3 0 0 1-1.3-1.3V4.3A1.3 1.3 0 0 1 4.8 3h8.9a1.3 1.3 0 0 1 1.3 1.3V8"/><rect x="8.5" y="8.5" width="12" height="11.5" rx="1.3"/><path d="M8.5 14.5h6.5V8.5"/></g>
</svg>
<svg style="left:1650px;top:435px" width="24" height="24" viewBox="0 0 24 24">
  <g fill="#e6e6e6"><rect x="4" y="3" width="15.5" height="1.8"/><rect x="4" y="19.2" width="15.5" height="1.8"/>
  <path d="M11.75 5.8l3.3 3.6h-2.4v5.2h2.4l-3.3 3.6-3.3-3.6h2.4V9.4H8.45z"/></g>
</svg>
<svg style="left:1684px;top:435px" width="24" height="24" viewBox="0 0 24 24">
  <g fill="#e6e6e6"><rect x="4" y="10.2" width="15.5" height="1.8"/><rect x="4" y="13.2" width="15.5" height="1.8"/>
  <path d="M11.75 9.2l-3-3.3h2.2V2.6h1.6v3.3h2.2zM11.75 16l-3 3.3h2.2v3.3h1.6v-3.3h2.2z"/></g>
</svg>
<svg style="left:1718px;top:435px" width="24" height="24" viewBox="0 0 24 24">
  <path fill="#e6e6e6" d="M19.14 12.94c.04-.3.06-.61.06-.94 0-.32-.02-.64-.07-.94l2.03-1.58c.18-.14.23-.41.12-.61l-1.92-3.32c-.12-.22-.37-.29-.59-.22l-2.39.96c-.5-.38-1.03-.7-1.62-.94l-.36-2.54c-.04-.24-.24-.41-.48-.41h-3.84c-.24 0-.43.17-.47.41l-.36 2.54c-.59.24-1.13.57-1.62.94l-2.39-.96c-.22-.08-.47 0-.59.22L2.74 8.87c-.12.21-.08.47.12.61l2.03 1.58c-.05.3-.09.63-.09.94s.02.64.07.94l-2.03 1.58c-.18.14-.23.41-.12.61l1.92 3.32c.12.22.37.29.59.22l2.39-.96c.5.38 1.03.7 1.62.94l.36 2.54c.05.24.24.41.48.41h3.84c.24 0 .44-.17.47-.41l.36-2.54c.59-.24 1.13-.56 1.62-.94l2.39.96c.22.08.47 0 .59-.22l1.92-3.32c.12-.22.07-.47-.12-.61l-2.01-1.58zM12 15.6c-1.98 0-3.6-1.62-3.6-3.6s1.62-3.6 3.6-3.6 3.6 1.62 3.6 3.6-1.62 3.6-3.6 3.6z"/>
</svg>
<svg style="left:1752px;top:435px" width="24" height="24" viewBox="0 0 24 24">
  <path d="M6.5 9.5l5.5 5.5 5.5-5.5" fill="none" stroke="#e6e6e6" stroke-width="2"/>
</svg>
<!-- table header -->
<div class="a" style="left:961px;top:472px;width:14px;height:14px;border:2px solid #3b95b5;border-radius:2px"></div>
<div class="t" style="left:1019px;top:472px;font-size:11.5px;line-height:14px;font-weight:bold;color:#e8e8e8">Статус</div>
<div class="t" style="left:1108.4px;top:472px;font-size:11.5px;line-height:14px;font-weight:bold;color:#e8e8e8">Элемент (Модель А)</div>
<div class="t" style="left:1394.6px;top:472px;font-size:11.5px;line-height:14px;font-weight:bold;color:#e8e8e8">Элемент (Модель В)</div>
<div class="t" style="left:1586.5px;top:472px;font-size:11.5px;line-height:14px;font-weight:bold;color:#e8e8e8">GUID элемента (Модель А)</div>
<div class="t" style="left:1611px;top:503px;font-size:14px;line-height:17px;color:#9a9a9a;letter-spacing:0.1px">Отсутствуют данные</div>
<!-- scrollbar -->
<div class="a" style="left:942px;top:805px;width:846px;height:8px;background:#666666"></div>
<div class="a" style="left:942px;top:805px;width:438px;height:8px;background:#3b95b5"></div>
<!-- right toolbar -->
<div class="a" style="left:1796px;top:38px;width:36px;height:773px;background:#555555"></div>
<div class="a" style="left:1796px;top:130px;width:36px;height:1.5px;background:#3d3a39"></div>
<div class="a" style="left:1796px;top:398.5px;width:36px;height:1.5px;background:#3d3a39"></div>
<div class="a" style="left:1796px;top:447.8px;width:36px;height:1.5px;background:#3d3a39"></div>
<div class="a" style="left:1796px;top:629px;width:36px;height:1.5px;background:#3d3a39"></div>
<div class="a" style="left:1796px;top:722px;width:36px;height:1.5px;background:#3d3a39"></div>
<div class="a" style="left:1832px;top:0;width:4px;height:813px;background:#000"></div>
<div class="a" style="left:1798px;top:638px;width:32px;height:32px;background:#888888"></div>
<div class="a" style="left:1798px;top:682px;width:32px;height:32px;background:#888888"></div>
<svg style="left:1796px;top:38px" width="36" height="775" viewBox="1796 38 36 775">
 <g fill="none" stroke="#e0e0e0" stroke-width="1.5" stroke-linejoin="round">
  <!-- tree cloud -->
  <path d="M1808 66.5a5 5 0 0 1-1.5-9.5a7.5 7.5 0 0 1 14.8-1.2a5 5 0 0 1 1.2 10.7"/>
  <path d="M1814.3 56v17.5M1814.3 64.5l-4-3M1814.3 66.5l4-3"/>
  <!-- fit screen -->
  <path d="M1808.5 110.8h-7.3V93.6h23.8v7.2" stroke-width="1.4"/>
  <path d="M1808.5 110.8h1.8v2.2" stroke-width="1.4"/>
  <path d="M1811.5 107v-4.2h4M1822.5 102.8h4v4.2M1826.5 114.5v4h-4M1815.5 118.5h-4v-4" stroke-width="1.4"/>
  <!-- ruler -->
  <rect x="1801.2" y="150.6" width="25.4" height="7.6" stroke-width="1.4"/>
  <path d="M1805 158v-3M1808 158v-2M1811 158v-4M1814 158v-2.5M1817 158v-4M1820 158v-2M1823 158v-3.5" stroke-width="1.1"/>
  <path d="M1801 161.2h26" stroke-width="1.8"/>
  <!-- section plane -->
  
  <!-- box section -->
  <path d="M1802.5 237.5h16.5v16h-16.5zM1802.5 237.5l6.5-5.5h16.5v16l-6.5 5.5M1819 237.5l6.5-5.5M1809 232v12" stroke-width="1.2"/>
  <path d="M1809 244l-6.5 9.5" stroke-width="1.1"/>
  <!-- floor plan -->
  <path d="M1804 276.6h22.5v20.3h-26v-16.8z" stroke-width="1.4"/>
  <path d="M1800.8 287h25.5M1812.8 277v20" stroke-width="1.2" stroke-dasharray="2.2 1.6"/>
  <path d="M1818 296.8v-4h8.5" stroke-width="1.3"/>
  <!-- target -->
  <circle cx="1814" cy="331" r="7.8" stroke-width="1.9"/>
  <path d="M1814 320.5v3M1814 338.5v3M1803.5 331h3M1821.5 331h3" stroke-width="2"/>
  <!-- flag -->
  <circle cx="1814" cy="374.8" r="12.8" stroke-width="1.2"/>
  <path d="M1808.2 382v-14.2c3-1.8 6 1.5 9 0s4.5-1 4.5-1v7.8c-3 1.5-6-1.5-9 0s-4.5 1-4.5 1" stroke-width="1.3"/>
  <!-- grid -->
  <path d="M1799 428L1828.8 411M1799 437.8L1828.8 421.5M1800.3 422.3L1818.4 433.5M1809 415.9L1828 427" stroke-width="1.1"/>
 </g>
 <g fill="#e0e0e0">
  <polygon points="1809,189.5 1819,184.5 1819,207 1809,213"/>
  <path d="M1800.8 202l6.8-7h20l-6.8 7z" fill="none" stroke="#555" stroke-width="2.6"/>
  <path d="M1800.8 202l6.8-7h20l-6.8 7z" fill="none" stroke="#e0e0e0" stroke-width="1.2"/>
  <polygon points="1809,195.5 1819,195.5 1819,207 1809,213" />
  <rect x="1808.5" y="234" width="2" height="16" opacity=".9"/>
  <circle cx="1814" cy="331" r="4.1"/>
  <polygon points="1802.5,102 1804,100.5 1804,110 1802.5,110" opacity="0"/>
  <polygon points="1819,106.5 1822.6,108.6 1822.6,112.8 1819,114.9 1815.4,112.8 1815.4,108.6"/>
  <text x="1798.3" y="421.8" font-size="6.5" font-family="Liberation Sans">1</text>
  <text x="1808.8" y="415.2" font-size="6.5" font-family="Liberation Sans">2</text>
 </g>
 <!-- dashed boxes -->
 <g fill="none" stroke="#e8e8e8" stroke-width="1.2" stroke-dasharray="2 2">
  <rect x="1802.6" y="461.6" width="23" height="23"/>
  <rect x="1802.6" y="505.4" width="23" height="23"/>
  <rect x="1802.6" y="549.4" width="23" height="23"/>
  <rect x="1802.6" y="593.4" width="23" height="23"/>
 </g>
 <g fill="none" stroke="#d8d8d8" stroke-width="1.2" stroke-linejoin="round">
  <path d="M1814 467l5.5 3v6.5l-5.5 3.2-5.5-3.2V470zM1808.5 470l5.5 3.2 5.5-3.2M1814 473.2v6.5"/>
 </g>
 <path fill="#dedede" d="M1814 511.5c-3.5 0-6.5 2.3-7.5 5.5 1 3.2 4 5.5 7.5 5.5s6.5-2.3 7.5-5.5c-1-3.2-4-5.5-7.5-5.5zm0 9a3.5 3.5 0 1 1 0-7 3.5 3.5 0 0 1 0 7zm0-5.3a1.8 1.8 0 1 0 0 3.6 1.8 1.8 0 0 0 0-3.6z"/>
 <path fill="#dedede" d="M1814 556c-3.5 0-6.5 2.3-7.5 5.5 1 3.2 4 5.5 7.5 5.5s6.5-2.3 7.5-5.5c-1-3.2-4-5.5-7.5-5.5zm0 9a3.5 3.5 0 1 1 0-7 3.5 3.5 0 0 1 0 7z"/>
 <path d="M1807 554.5l12 13.5" stroke="#555" stroke-width="2.6"/>
 <path d="M1807 554.5l12 13.5" stroke="#dedede" stroke-width="1.2"/>
 <rect x="1812" y="603" width="16" height="16" fill="#dcdcdc"/>
 <path d="M1815.5 606.5l9 9M1824.5 606.5l-9 9" stroke="#333" stroke-width="1.2"/>
 <!-- cube button -->
 <path d="M1802.5 644.5l10-2.8 12.5 2.5v12.5l-10.2 9.3-12.3-7z" fill="#dedede"/>
 <path d="M1814.8 647.5l10.2-3.3v12.5l-10.2 9.3z" fill="#8a8a8a" stroke="#dedede" stroke-width="1.1"/>
 <path d="M1802.5 644.5l12.3 3" stroke="#888" stroke-width="1"/>
 <!-- orbit -->
 <g fill="none" stroke="#dedede" stroke-width="1.5">
  <ellipse cx="1814" cy="698" rx="12" ry="5"/>
  <ellipse cx="1814" cy="698" rx="5" ry="11"/>
  <path d="M1814 696v3.5l-3.3 3M1814 699.5l3.3 3" stroke-width="1"/>
 </g>
 <polygon points="1800,804 1800,809 1804.5,809" fill="#fff"/>
</svg>
</body></html>
